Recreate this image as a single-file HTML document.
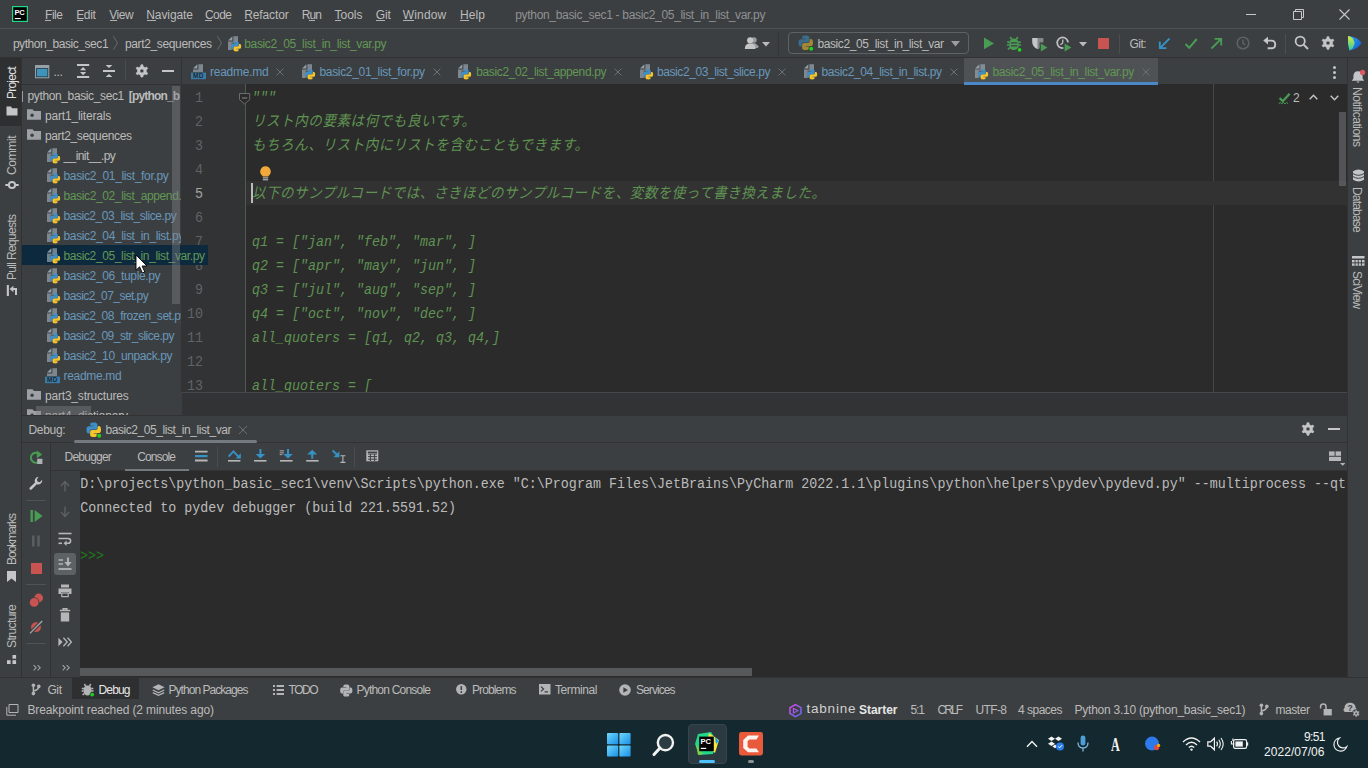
<!DOCTYPE html>
<html lang="ja"><head><meta charset="utf-8"><title>python_basic_sec1 - basic2_05_list_in_list_var.py</title>
<style>
html,body{margin:0;padding:0;}
body{width:1368px;height:768px;overflow:hidden;background:#3c3f41;position:relative;font-family:"Liberation Sans","Noto Sans CJK JP",sans-serif;font-size:12px;color:#bbb;}
.a{position:absolute;}
.t{position:absolute;white-space:pre;}
svg{position:absolute;overflow:visible;}
.vt{position:absolute;white-space:pre;transform-origin:0 0;line-height:20px;font-size:12px;color:#bbb;}
u{text-decoration:underline;text-underline-offset:1px;}
</style></head><body>
<div class="a" style="left:0px;top:28px;width:1368px;height:1px;background:#4f5254;"></div><div class="a" style="left:0px;top:57px;width:1368px;height:1px;background:#323232;"></div><div class="a" style="left:0px;top:58px;width:22px;height:620px;background:#3c3f41;"></div><div class="a" style="left:21px;top:58px;width:1px;height:620px;background:#323232;"></div><div class="a" style="left:0px;top:58px;width:21px;height:68px;background:#2d2f30;"></div><div class="a" style="left:22px;top:58px;width:159px;height:357px;background:#3c3f41;"></div><div class="a" style="left:22px;top:84px;width:159px;height:1px;background:#323232;"></div><div class="a" style="left:181px;top:58px;width:1px;height:357px;background:#323232;"></div><div class="a" style="left:182px;top:58px;width:1165px;height:26px;background:#3c3f41;"></div><div class="a" style="left:182px;top:84px;width:1165px;height:308px;background:#2b2b2b;"></div><div class="a" style="left:182px;top:84px;width:63px;height:308px;background:#313335;"></div><div class="a" style="left:245px;top:84px;width:1px;height:308px;background:#555555;"></div><div class="a" style="left:1213px;top:84px;width:1px;height:308px;background:#474747;"></div><div class="a" style="left:246px;top:181px;width:1101px;height:24px;background:#323232;"></div><div class="a" style="left:1347px;top:58px;width:21px;height:620px;background:#3c3f41;"></div><div class="a" style="left:1347px;top:58px;width:1px;height:620px;background:#323232;"></div><div class="a" style="left:22px;top:392px;width:1325px;height:24px;background:#3c3f41;"></div><div class="a" style="left:22px;top:415px;width:1325px;height:1px;background:#323232;"></div><div class="a" style="left:22px;top:416px;width:1325px;height:26px;background:#3c3f41;"></div><div class="a" style="left:22px;top:442px;width:1325px;height:1px;background:#323232;"></div><div class="a" style="left:22px;top:443px;width:1325px;height:234px;background:#3c3f41;"></div><div class="a" style="left:80px;top:471px;width:1267px;height:206px;background:#2b2b2b;"></div><div class="a" style="left:0px;top:677px;width:1368px;height:1px;background:#323232;"></div><div class="a" style="left:0px;top:678px;width:1368px;height:42px;background:#3c3f41;"></div><div class="a" style="left:0px;top:720px;width:1368px;height:48px;background:#14292f;"></div><svg style="left:12px;top:6px;" width="16" height="16" viewBox="0 0 16 16"><rect x="0" y="0" width="16" height="16" fill="#21d789"/><rect x="1.2" y="1.2" width="13.6" height="13.6" fill="#000"/><text x="2.4" y="8.6" font-size="7.6" font-weight="bold" font-family="Liberation Sans,sans-serif" fill="#fff" letter-spacing="-0.2">PC</text><rect x="2.8" y="12" width="6" height="1.1" fill="#fff"/></svg><span class="t" style="left:45px;top:4.699999999999999px;line-height:20px;font-size:12px;color:#bbbbbb;font-family:'Liberation Sans','Noto Sans CJK JP',sans-serif;letter-spacing:-0.448px;">File</span><span class="t" style="left:76.25px;top:4.699999999999999px;line-height:20px;font-size:12px;color:#bbbbbb;font-family:'Liberation Sans','Noto Sans CJK JP',sans-serif;letter-spacing:-0.396px;">Edit</span><span class="t" style="left:109.25px;top:4.699999999999999px;line-height:20px;font-size:12px;color:#bbbbbb;font-family:'Liberation Sans','Noto Sans CJK JP',sans-serif;letter-spacing:-0.432px;">View</span><span class="t" style="left:146.25px;top:4.699999999999999px;line-height:20px;font-size:12px;color:#bbbbbb;font-family:'Liberation Sans','Noto Sans CJK JP',sans-serif;letter-spacing:-0.089px;">Navigate</span><span class="t" style="left:205px;top:4.699999999999999px;line-height:20px;font-size:12px;color:#bbbbbb;font-family:'Liberation Sans','Noto Sans CJK JP',sans-serif;letter-spacing:-0.562px;">Code</span><span class="t" style="left:244.25px;top:4.699999999999999px;line-height:20px;font-size:12px;color:#bbbbbb;font-family:'Liberation Sans','Noto Sans CJK JP',sans-serif;letter-spacing:-0.123px;">Refactor</span><span class="t" style="left:301.75px;top:4.699999999999999px;line-height:20px;font-size:12px;color:#bbbbbb;font-family:'Liberation Sans','Noto Sans CJK JP',sans-serif;letter-spacing:-0.883px;">Run</span><span class="t" style="left:334.5px;top:4.699999999999999px;line-height:20px;font-size:12px;color:#bbbbbb;font-family:'Liberation Sans','Noto Sans CJK JP',sans-serif;letter-spacing:-0.004px;">Tools</span><span class="t" style="left:375.75px;top:4.699999999999999px;line-height:20px;font-size:12px;color:#bbbbbb;font-family:'Liberation Sans','Noto Sans CJK JP',sans-serif;letter-spacing:-0.172px;">Git</span><span class="t" style="left:402.75px;top:4.699999999999999px;line-height:20px;font-size:12px;color:#bbbbbb;font-family:'Liberation Sans','Noto Sans CJK JP',sans-serif;letter-spacing:0.163px;">Window</span><span class="t" style="left:460px;top:4.699999999999999px;line-height:20px;font-size:12px;color:#bbbbbb;font-family:'Liberation Sans','Noto Sans CJK JP',sans-serif;letter-spacing:0.104px;">Help</span><div class="a" style="left:45px;top:20.3px;width:6px;height:1px;background:#b0b0b0;"></div><div class="a" style="left:76.5px;top:20.3px;width:6.0px;height:1px;background:#b0b0b0;"></div><div class="a" style="left:109.5px;top:20.3px;width:7.5px;height:1px;background:#b0b0b0;"></div><div class="a" style="left:146.5px;top:20.3px;width:9.0px;height:1px;background:#b0b0b0;"></div><div class="a" style="left:205px;top:20.3px;width:7px;height:1px;background:#b0b0b0;"></div><div class="a" style="left:244.5px;top:20.3px;width:7.5px;height:1px;background:#b0b0b0;"></div><div class="a" style="left:308.5px;top:20.3px;width:6.5px;height:1px;background:#b0b0b0;"></div><div class="a" style="left:334.5px;top:20.3px;width:6.5px;height:1px;background:#b0b0b0;"></div><div class="a" style="left:376px;top:20.3px;width:8.5px;height:1px;background:#b0b0b0;"></div><div class="a" style="left:403px;top:20.3px;width:11px;height:1px;background:#b0b0b0;"></div><div class="a" style="left:460px;top:20.3px;width:8.5px;height:1px;background:#b0b0b0;"></div><span class="t" style="left:515.25px;top:4.699999999999999px;line-height:20px;font-size:12px;color:#8f9193;font-family:'Liberation Sans','Noto Sans CJK JP',sans-serif;letter-spacing:-0.318px;">python_basic_sec1 - basic2_05_list_in_list_var.py</span><svg style="left:1246px;top:14px;" width="10" height="1" viewBox="0 0 10 1"><rect width="10" height="1" fill="#c8c8c8"/></svg><svg style="left:1293px;top:9px;" width="11" height="11" viewBox="0 0 11 11"><path d="M0.5 2.5 h8 v8 h-8z M2.5 2.5 v-2 h8 v8 h-2" stroke="#c8c8c8" fill="none" stroke-width="1"/></svg><svg style="left:1339px;top:9px;" width="11" height="11" viewBox="0 0 11 11"><path d="M0.5 0.5 L10.5 10.5 M10.5 0.5 L0.5 10.5" stroke="#c8c8c8" fill="none" stroke-width="1.1"/></svg><span class="t" style="left:12.9px;top:34.0px;line-height:20px;font-size:12px;color:#bbbbbb;font-family:'Liberation Sans','Noto Sans CJK JP',sans-serif;letter-spacing:-0.441px;">python_basic_sec1</span><span class="t" style="left:125px;top:34.0px;line-height:20px;font-size:12px;color:#bbbbbb;font-family:'Liberation Sans','Noto Sans CJK JP',sans-serif;letter-spacing:-0.363px;">part2_sequences</span><svg style="left:113.1px;top:36.4px;" width="5" height="14" viewBox="0 0 5 14"><path d="M0.4 0.3 L4.5 7 L0.4 13.7" stroke="#66696b" fill="none" stroke-width="1"/></svg><svg style="left:217.1px;top:36.4px;" width="5" height="14" viewBox="0 0 5 14"><path d="M0.4 0.3 L4.5 7 L0.4 13.7" stroke="#66696b" fill="none" stroke-width="1"/></svg><svg style="left:227px;top:36px;" width="16" height="16" viewBox="0 0 16 16"><path d="M6.4 0.2 H11 V14 H1 V5.6 H6.4z" fill="#9aa7b0" fill-opacity=".7"/><path d="M5.4 0.2 L1 4.6 H5.4z" fill="#9aa7b0" fill-opacity=".9"/><rect x="4.6" y="6.4" width="7" height="8" fill="#3c3f41" fill-opacity=".55"/><g transform="translate(4.2 5.4) scale(1.0)"><path d="M4.9 0 C2.4 0 2.6 1.1 2.6 1.1 V2.2 H5 V2.6 H1.6 C1.6 2.6 0 2.4 0 5 C0 7.6 1.4 7.5 1.4 7.5 H2.3 V6.3 C2.3 6.3 2.2 4.9 3.7 4.9 H6.1 C6.1 4.9 7.5 4.9 7.5 3.5 V1.4 C7.5 1.4 7.7 0 4.9 0z" fill="#3d8fc9"/><path d="M5.1 10 C7.6 10 7.4 8.9 7.4 8.9 V7.8 H5 V7.4 H8.4 C8.4 7.4 10 7.6 10 5 C10 2.4 8.6 2.5 8.6 2.5 H7.7 V3.7 C7.7 3.7 7.8 5.1 6.3 5.1 H3.9 C3.9 5.1 2.5 5.1 2.5 6.5 V8.6 C2.5 8.6 2.3 10 5.1 10z" fill="#f5c52c"/></g></svg><span class="t" style="left:244.25px;top:34.0px;line-height:20px;font-size:12px;color:#629755;font-family:'Liberation Sans','Noto Sans CJK JP',sans-serif;letter-spacing:-0.352px;">basic2_05_list_in_list_var.py</span><svg style="left:744px;top:35.5px;" width="16" height="14" viewBox="0 0 16 14"><circle cx="10" cy="4" r="2.7" fill="#9a9c9e"/><path d="M6 12 q0 -5 4.2 -5 q2 0.4 4.6 3.6 l-1 1.4z" fill="#9a9c9e"/><circle cx="6.2" cy="4.4" r="3.1" fill="#c3c5c6"/><path d="M0.8 13 q0 -5.4 5.4 -5.4 q5.4 0 5.4 5.4z" fill="#c3c5c6"/></svg><svg style="left:762px;top:42px;" width="8" height="5" viewBox="0 0 8 5"><path d="M0 0 H8 L4 4.5z" fill="#bbbbbb"/></svg><div class="a" style="left:778px;top:32px;width:1px;height:24px;background:#333537;"></div><div class="a" style="left:788px;top:32px;width:181px;height:22px;border:1px solid #5f6265;border-radius:4px;box-sizing:border-box;"></div><svg style="left:798px;top:35px;" width="16" height="16" viewBox="0 0 16 16"><g opacity=".55"><g transform="translate(0.5 0.5) scale(1.45)"><path d="M4.9 0 C2.4 0 2.6 1.1 2.6 1.1 V2.2 H5 V2.6 H1.6 C1.6 2.6 0 2.4 0 5 C0 7.6 1.4 7.5 1.4 7.5 H2.3 V6.3 C2.3 6.3 2.2 4.9 3.7 4.9 H6.1 C6.1 4.9 7.5 4.9 7.5 3.5 V1.4 C7.5 1.4 7.7 0 4.9 0z" fill="#3d8fc9"/><path d="M5.1 10 C7.6 10 7.4 8.9 7.4 8.9 V7.8 H5 V7.4 H8.4 C8.4 7.4 10 7.6 10 5 C10 2.4 8.6 2.5 8.6 2.5 H7.7 V3.7 C7.7 3.7 7.8 5.1 6.3 5.1 H3.9 C3.9 5.1 2.5 5.1 2.5 6.5 V8.6 C2.5 8.6 2.3 10 5.1 10z" fill="#f5c52c"/></g></g><circle cx="13.2" cy="13.8" r="2.7" fill="#3c3f41"/><circle cx="13.2" cy="13.8" r="2" fill="#1fd11f"/></svg><span class="t" style="left:817.5px;top:34.0px;line-height:20px;font-size:12px;color:#bbbbbb;font-family:'Liberation Sans','Noto Sans CJK JP',sans-serif;letter-spacing:-0.410px;">basic2_05_list_in_list_var</span><svg style="left:951px;top:41px;" width="9" height="6" viewBox="0 0 9 6"><path d="M0 0 H9 L4.5 5.5z" fill="#9a9c9e"/></svg><svg style="left:982.5px;top:36.5px;" width="12" height="13" viewBox="0 0 12 13"><path d="M1 0.6 L11 6.4 L1 12.2z" fill="#499c54"/></svg><svg style="left:1006px;top:35.5px;" width="16" height="16" viewBox="0 0 16 16"><path d="M8 2.6 C11.4 2.6 12.8 5.2 12.8 8.4 C12.8 12 10.9 14 8 14 C5.1 14 3.2 12 3.2 8.4 C3.2 5.2 4.6 2.6 8 2.6z" fill="#499c54"/><path d="M5.6 3.2 L4.2 1 M10.4 3.2 L11.8 1 M3.6 6.2 H1.2 M3.4 9 H0.9 M4 11.6 L1.9 13.4 M12.4 6.2 H14.8 M12.6 9 H15.1 M12 11.6 L14.1 13.4" stroke="#499c54" stroke-width="1.7" fill="none"/><path d="M4.8 6.9 H11.2 M4.8 9.9 H11.2" stroke="#3c3f41" stroke-width="1.1"/><circle cx="13.6" cy="13.8" r="2.5" fill="#3c3f41"/><circle cx="13.6" cy="13.8" r="1.9" fill="#23d123"/></svg><svg style="left:1031px;top:35.5px;" width="17" height="16" viewBox="0 0 17 16"><path d="M1.2 2 H6.8 V13.2 Q1.2 11 1.2 6z" fill="#c3c5c6"/><path d="M6.8 2 H12.4 V6 Q12.4 11 6.8 13.2z" fill="#85888a"/><path d="M6.8 3.8 H10.6 V6.4 H6.8z" fill="#3c3f41" opacity="0"/><path d="M8.6 6.4 H17 V16 H8.6z" fill="#3c3f41"/><path d="M9.8 7.6 L16.4 11.5 L9.8 15.4z" fill="#499c54"/></svg><svg style="left:1055px;top:35.5px;" width="17" height="16" viewBox="0 0 17 16"><circle cx="7.6" cy="6.8" r="5.4" fill="none" stroke="#bfc1c2" stroke-width="1.7"/><path d="M7.8 3.4 V7 L5.4 8.8" stroke="#bfc1c2" stroke-width="1.3" fill="none"/><path d="M8.4 6.4 H17 V16 H8.4z" fill="#3c3f41"/><path d="M9.6 7.6 L16.4 11.5 L9.6 15.4z" fill="#499c54"/></svg><svg style="left:1078.8px;top:41.8px;" width="8" height="5" viewBox="0 0 8 5"><path d="M0 0 H8 L4 4.5z" fill="#bbbbbb"/></svg><div class="a" style="left:1097.5px;top:37.5px;width:11px;height:11px;background:#c75450;"></div><div class="a" style="left:1119px;top:34px;width:1px;height:20px;background:#4b4d4f;"></div><span class="t" style="left:1129.5px;top:34.0px;line-height:20px;font-size:12px;color:#bbbbbb;font-family:'Liberation Sans','Noto Sans CJK JP',sans-serif;letter-spacing:-0.557px;">Git:</span><svg style="left:1158px;top:36.5px;" width="13" height="13" viewBox="0 0 13 13"><path d="M11.5 1.5 L2.2 10.8 M1.8 4.6 V11.2 H8.4" stroke="#3592c4" stroke-width="1.8" fill="none"/></svg><svg style="left:1184px;top:36.5px;" width="14" height="13" viewBox="0 0 14 13"><path d="M1.5 7 L5.2 10.8 L12.8 2" stroke="#499c54" stroke-width="2" fill="none"/></svg><svg style="left:1210px;top:36.5px;" width="13" height="13" viewBox="0 0 13 13"><path d="M1.5 11.5 L10.8 2.2 M4.6 1.8 H11.2 V8.4" stroke="#499c54" stroke-width="1.8" fill="none"/></svg><svg style="left:1236px;top:36px;" width="14" height="14" viewBox="0 0 14 14"><circle cx="7" cy="7" r="5.8" fill="none" stroke="#5e6163" stroke-width="1.6"/><path d="M7 3.6 V7.2 L9.2 8.8" stroke="#5e6163" stroke-width="1.5" fill="none"/></svg><svg style="left:1262px;top:35.5px;" width="15" height="15" viewBox="0 0 15 15"><path d="M5 4.6 H9.4 Q13.2 4.6 13.2 8.4 Q13.2 12.2 9.4 12.2 H5.6" stroke="#c3c5c6" stroke-width="1.9" fill="none"/><path d="M6 0.8 V8.4 L1.2 4.6z" fill="#c3c5c6"/></svg><div class="a" style="left:1285px;top:34px;width:1px;height:20px;background:#4b4d4f;"></div><svg style="left:1294px;top:35px;" width="15" height="15" viewBox="0 0 15 15"><circle cx="6.2" cy="6.2" r="4.6" fill="none" stroke="#c3c5c6" stroke-width="1.8"/><path d="M9.6 9.6 L14 14" stroke="#c3c5c6" stroke-width="2"/></svg><svg style="left:1321px;top:36px;" width="14" height="14" viewBox="0 0 16 16"><path d="M6.65 2.98 L6.87 0.89 L9.13 0.89 L9.35 2.98 L11.68 4.32 L13.60 3.47 L14.72 5.42 L13.02 6.65 L13.02 9.35 L14.72 10.58 L13.60 12.53 L11.68 11.68 L9.35 13.02 L9.13 15.11 L6.87 15.11 L6.65 13.02 L4.32 11.68 L2.40 12.53 L1.28 10.58 L2.98 9.35 L2.98 6.65 L1.28 5.42 L2.40 3.47 L4.32 4.32z M8 5.7 a2.3 2.3 0 1 0 0.001 0z" fill="#c3c5c6" fill-rule="evenodd" stroke="#c3c5c6" stroke-width="0.8" stroke-linejoin="round"/></svg><svg style="left:1346px;top:35px;" width="17" height="17" viewBox="0 0 17 17"><defs><linearGradient id="tb1" x1="0" y1="0" x2="0" y2="1"><stop offset="0" stop-color="#d8ec3c"/><stop offset="1" stop-color="#2cc7b0"/></linearGradient><linearGradient id="tb2" x1="0" y1="0" x2="1" y2="1"><stop offset="0" stop-color="#2aa8f5"/><stop offset="1" stop-color="#1456c8"/></linearGradient></defs><path d="M2 1 Q12 2 15.6 8 Q12 14 3.4 15.6 Q1.4 8 2 1z" fill="url(#tb2)"/><path d="M2 1 Q7.6 2 8.6 8 Q8 13.4 3.4 15.6 Q1.4 8 2 1z" fill="url(#tb1)"/></svg><span class="t" style="left:1.6999999999999993px;top:98.7px;transform:rotate(-90deg);transform-origin:0 0;line-height:20px;font-size:12px;color:#e0e0e0;font-family:'Liberation Sans','Noto Sans CJK JP',sans-serif;letter-spacing:-0.777px;">Project</span><svg style="left:5.5px;top:106px;" width="12" height="10" viewBox="0 0 12 10"><path d="M0.5 0.5 H5 L6.2 2.2 H11.5 V9.5 H0.5z" fill="#c3c5c6"/></svg><span class="t" style="left:1.6999999999999993px;top:175px;transform:rotate(-90deg);transform-origin:0 0;line-height:20px;font-size:12px;color:#bbbbbb;font-family:'Liberation Sans','Noto Sans CJK JP',sans-serif;letter-spacing:-0.329px;">Commit</span><svg style="left:4.5px;top:180px;" width="14" height="10" viewBox="0 0 14 10"><circle cx="7" cy="5" r="3.1" fill="none" stroke="#c3c5c6" stroke-width="2"/><path d="M0.3 5 H3.4 M10.6 5 H13.7" stroke="#c3c5c6" stroke-width="2"/></svg><span class="t" style="left:1.6999999999999993px;top:279.7px;transform:rotate(-90deg);transform-origin:0 0;line-height:20px;font-size:12px;color:#bbbbbb;font-family:'Liberation Sans','Noto Sans CJK JP',sans-serif;letter-spacing:-0.671px;">Pull Requests</span><svg style="left:6px;top:285px;" width="12" height="12" viewBox="0 0 12 12"><rect x="0.8" y="0" width="2.1" height="11" fill="#c3c5c6"/><path d="M3.6 4 L7.4 0.8 V7.2z" fill="#c3c5c6"/><path d="M7 4 H10 V10" stroke="#c3c5c6" stroke-width="2" fill="none"/></svg><span class="t" style="left:1.6999999999999993px;top:565.3px;transform:rotate(-90deg);transform-origin:0 0;line-height:20px;font-size:12px;color:#bbbbbb;font-family:'Liberation Sans','Noto Sans CJK JP',sans-serif;letter-spacing:-1.004px;">Bookmarks</span><svg style="left:7px;top:571px;" width="10" height="12" viewBox="0 0 10 12"><path d="M0 0 H9 V11 L4.5 7.4 L0 11z" fill="#c3c5c6"/></svg><span class="t" style="left:1.6999999999999993px;top:648.3px;transform:rotate(-90deg);transform-origin:0 0;line-height:20px;font-size:12px;color:#bbbbbb;font-family:'Liberation Sans','Noto Sans CJK JP',sans-serif;letter-spacing:-0.611px;">Structure</span><svg style="left:7px;top:655px;" width="10" height="10" viewBox="0 0 10 10"><rect x="5.5" y="0" width="3.6" height="3.7" fill="#c3c5c6"/><rect x="0" y="5.2" width="3.6" height="3.8" fill="#c3c5c6"/><rect x="5.5" y="5.2" width="3.6" height="3.8" fill="#c3c5c6"/></svg><svg style="left:35px;top:65px;" width="15" height="14" viewBox="0 0 15 14"><rect x="0" y="0" width="14.3" height="13.3" fill="#97a0a7"/><rect x="1.1" y="3.1" width="12.1" height="9.1" fill="#21394a"/><rect x="1.9" y="3.9" width="10.5" height="7.5" fill="#3f94b8"/></svg><span class="t" style="left:53.6px;top:61.5px;line-height:20px;font-size:12px;color:#bbbbbb;font-family:'Liberation Sans','Noto Sans CJK JP',sans-serif;letter-spacing:-0.4px;">...</span><svg style="left:77px;top:63.8px;" width="13" height="15" viewBox="0 0 13 15"><path d="M0 1.1 H12.2 M0 13.1 H12.2" stroke="#c3c5c6" stroke-width="2"/><path d="M3 6.2 L6.1 3 L9.2 6.2z M3 7.9 L6.1 11.2 L9.2 7.9z" fill="#c3c5c6"/></svg><svg style="left:103px;top:64px;" width="13" height="14" viewBox="0 0 13 14"><path d="M0 7 H12" stroke="#c3c5c6" stroke-width="2"/><path d="M2.6 1 L6 4 L9.4 1z M2.6 13 L6 10 L9.4 13z" fill="#c3c5c6"/></svg><div class="a" style="left:125px;top:60px;width:1px;height:20px;background:#4b4d4f;"></div><svg style="left:135.2px;top:64.3px;" width="13.8" height="13.8" viewBox="0 0 16 16"><path d="M6.65 2.98 L6.87 0.89 L9.13 0.89 L9.35 2.98 L11.68 4.32 L13.60 3.47 L14.72 5.42 L13.02 6.65 L13.02 9.35 L14.72 10.58 L13.60 12.53 L11.68 11.68 L9.35 13.02 L9.13 15.11 L6.87 15.11 L6.65 13.02 L4.32 11.68 L2.40 12.53 L1.28 10.58 L2.98 9.35 L2.98 6.65 L1.28 5.42 L2.40 3.47 L4.32 4.32z M8 5.7 a2.3 2.3 0 1 0 0.001 0z" fill="#c3c5c6" fill-rule="evenodd" stroke="#c3c5c6" stroke-width="0.8" stroke-linejoin="round"/></svg><div class="a" style="left:162px;top:70px;width:12px;height:2px;background:#c3c5c6;"></div><div class="a" style="left:22px;top:85px;width:159px;height:330px;overflow:hidden;"><div class="a" style="left:0px;top:6px;width:1px;height:11px;background:#9a9c9e;"></div><span class="t" style="left:5.5px;top:1.0px;line-height:20px;font-size:12px;color:#bbbbbb;font-family:'Liberation Sans','Noto Sans CJK JP',sans-serif;letter-spacing:-0.375px;">python_basic_sec1</span><span class="t" style="left:106.75px;top:1.0px;line-height:20px;font-size:12px;color:#bbbbbb;font-family:'Liberation Sans','Noto Sans CJK JP',sans-serif;letter-spacing:-0.819px;font-weight:bold;">[python_b</span><span class="t" style="left:158.8px;top:1.0px;line-height:20px;font-size:12px;color:#bbbbbb;font-family:'Liberation Sans','Noto Sans CJK JP',sans-serif;font-weight:bold;">asic_sec1]</span><svg style="left:5px;top:24px;" width="16" height="16" viewBox="0 0 16 16"><path d="M0 0.2 H5.5 L7 2 H14 V10.8 H0z" fill="#9da1a5"/><circle cx="5.1" cy="6.3" r="1.7" fill="#3c3f41"/></svg><span class="t" style="left:23px;top:21.0px;line-height:20px;font-size:12px;color:#bbbbbb;font-family:'Liberation Sans','Noto Sans CJK JP',sans-serif;letter-spacing:-0.189px;">part1_literals</span><svg style="left:5px;top:44px;" width="16" height="16" viewBox="0 0 16 16"><path d="M0 0.2 H5.5 L7 2 H14 V10.8 H0z" fill="#9da1a5"/><circle cx="5.1" cy="6.3" r="1.7" fill="#3c3f41"/></svg><span class="t" style="left:23px;top:41.0px;line-height:20px;font-size:12px;color:#bbbbbb;font-family:'Liberation Sans','Noto Sans CJK JP',sans-serif;letter-spacing:-0.363px;">part2_sequences</span><svg style="left:24px;top:63px;" width="16" height="16" viewBox="0 0 16 16"><path d="M6.4 0.2 H11 V14 H1 V5.6 H6.4z" fill="#9aa7b0" fill-opacity=".7"/><path d="M5.4 0.2 L1 4.6 H5.4z" fill="#9aa7b0" fill-opacity=".9"/><rect x="4.6" y="6.4" width="7" height="8" fill="#3c3f41" fill-opacity=".55"/><g transform="translate(4.2 5.4) scale(1.0)"><path d="M4.9 0 C2.4 0 2.6 1.1 2.6 1.1 V2.2 H5 V2.6 H1.6 C1.6 2.6 0 2.4 0 5 C0 7.6 1.4 7.5 1.4 7.5 H2.3 V6.3 C2.3 6.3 2.2 4.9 3.7 4.9 H6.1 C6.1 4.9 7.5 4.9 7.5 3.5 V1.4 C7.5 1.4 7.7 0 4.9 0z" fill="#3d8fc9"/><path d="M5.1 10 C7.6 10 7.4 8.9 7.4 8.9 V7.8 H5 V7.4 H8.4 C8.4 7.4 10 7.6 10 5 C10 2.4 8.6 2.5 8.6 2.5 H7.7 V3.7 C7.7 3.7 7.8 5.1 6.3 5.1 H3.9 C3.9 5.1 2.5 5.1 2.5 6.5 V8.6 C2.5 8.6 2.3 10 5.1 10z" fill="#f5c52c"/></g></svg><span class="t" style="left:41.5px;top:61.0px;line-height:20px;font-size:12px;color:#bbbbbb;font-family:'Liberation Sans','Noto Sans CJK JP',sans-serif;letter-spacing:-0.580px;">__init__.py</span><svg style="left:24px;top:83px;" width="16" height="16" viewBox="0 0 16 16"><path d="M6.4 0.2 H11 V14 H1 V5.6 H6.4z" fill="#9aa7b0" fill-opacity=".7"/><path d="M5.4 0.2 L1 4.6 H5.4z" fill="#9aa7b0" fill-opacity=".9"/><rect x="4.6" y="6.4" width="7" height="8" fill="#3c3f41" fill-opacity=".55"/><g transform="translate(4.2 5.4) scale(1.0)"><path d="M4.9 0 C2.4 0 2.6 1.1 2.6 1.1 V2.2 H5 V2.6 H1.6 C1.6 2.6 0 2.4 0 5 C0 7.6 1.4 7.5 1.4 7.5 H2.3 V6.3 C2.3 6.3 2.2 4.9 3.7 4.9 H6.1 C6.1 4.9 7.5 4.9 7.5 3.5 V1.4 C7.5 1.4 7.7 0 4.9 0z" fill="#3d8fc9"/><path d="M5.1 10 C7.6 10 7.4 8.9 7.4 8.9 V7.8 H5 V7.4 H8.4 C8.4 7.4 10 7.6 10 5 C10 2.4 8.6 2.5 8.6 2.5 H7.7 V3.7 C7.7 3.7 7.8 5.1 6.3 5.1 H3.9 C3.9 5.1 2.5 5.1 2.5 6.5 V8.6 C2.5 8.6 2.3 10 5.1 10z" fill="#f5c52c"/></g></svg><span class="t" style="left:41.5px;top:81.0px;line-height:20px;font-size:12px;color:#6897bb;font-family:'Liberation Sans','Noto Sans CJK JP',sans-serif;letter-spacing:-0.341px;">basic2_01_list_for.py</span><svg style="left:24px;top:103px;" width="16" height="16" viewBox="0 0 16 16"><path d="M6.4 0.2 H11 V14 H1 V5.6 H6.4z" fill="#9aa7b0" fill-opacity=".7"/><path d="M5.4 0.2 L1 4.6 H5.4z" fill="#9aa7b0" fill-opacity=".9"/><rect x="4.6" y="6.4" width="7" height="8" fill="#3c3f41" fill-opacity=".55"/><g transform="translate(4.2 5.4) scale(1.0)"><path d="M4.9 0 C2.4 0 2.6 1.1 2.6 1.1 V2.2 H5 V2.6 H1.6 C1.6 2.6 0 2.4 0 5 C0 7.6 1.4 7.5 1.4 7.5 H2.3 V6.3 C2.3 6.3 2.2 4.9 3.7 4.9 H6.1 C6.1 4.9 7.5 4.9 7.5 3.5 V1.4 C7.5 1.4 7.7 0 4.9 0z" fill="#3d8fc9"/><path d="M5.1 10 C7.6 10 7.4 8.9 7.4 8.9 V7.8 H5 V7.4 H8.4 C8.4 7.4 10 7.6 10 5 C10 2.4 8.6 2.5 8.6 2.5 H7.7 V3.7 C7.7 3.7 7.8 5.1 6.3 5.1 H3.9 C3.9 5.1 2.5 5.1 2.5 6.5 V8.6 C2.5 8.6 2.3 10 5.1 10z" fill="#f5c52c"/></g></svg><span class="t" style="left:41.5px;top:101.0px;line-height:20px;font-size:12px;color:#629755;font-family:'Liberation Sans','Noto Sans CJK JP',sans-serif;letter-spacing:-0.371px;">basic2_02_list_append.py</span><svg style="left:24px;top:123px;" width="16" height="16" viewBox="0 0 16 16"><path d="M6.4 0.2 H11 V14 H1 V5.6 H6.4z" fill="#9aa7b0" fill-opacity=".7"/><path d="M5.4 0.2 L1 4.6 H5.4z" fill="#9aa7b0" fill-opacity=".9"/><rect x="4.6" y="6.4" width="7" height="8" fill="#3c3f41" fill-opacity=".55"/><g transform="translate(4.2 5.4) scale(1.0)"><path d="M4.9 0 C2.4 0 2.6 1.1 2.6 1.1 V2.2 H5 V2.6 H1.6 C1.6 2.6 0 2.4 0 5 C0 7.6 1.4 7.5 1.4 7.5 H2.3 V6.3 C2.3 6.3 2.2 4.9 3.7 4.9 H6.1 C6.1 4.9 7.5 4.9 7.5 3.5 V1.4 C7.5 1.4 7.7 0 4.9 0z" fill="#3d8fc9"/><path d="M5.1 10 C7.6 10 7.4 8.9 7.4 8.9 V7.8 H5 V7.4 H8.4 C8.4 7.4 10 7.6 10 5 C10 2.4 8.6 2.5 8.6 2.5 H7.7 V3.7 C7.7 3.7 7.8 5.1 6.3 5.1 H3.9 C3.9 5.1 2.5 5.1 2.5 6.5 V8.6 C2.5 8.6 2.3 10 5.1 10z" fill="#f5c52c"/></g></svg><span class="t" style="left:41.5px;top:121.0px;line-height:20px;font-size:12px;color:#6897bb;font-family:'Liberation Sans','Noto Sans CJK JP',sans-serif;letter-spacing:-0.432px;">basic2_03_list_slice.py</span><svg style="left:24px;top:143px;" width="16" height="16" viewBox="0 0 16 16"><path d="M6.4 0.2 H11 V14 H1 V5.6 H6.4z" fill="#9aa7b0" fill-opacity=".7"/><path d="M5.4 0.2 L1 4.6 H5.4z" fill="#9aa7b0" fill-opacity=".9"/><rect x="4.6" y="6.4" width="7" height="8" fill="#3c3f41" fill-opacity=".55"/><g transform="translate(4.2 5.4) scale(1.0)"><path d="M4.9 0 C2.4 0 2.6 1.1 2.6 1.1 V2.2 H5 V2.6 H1.6 C1.6 2.6 0 2.4 0 5 C0 7.6 1.4 7.5 1.4 7.5 H2.3 V6.3 C2.3 6.3 2.2 4.9 3.7 4.9 H6.1 C6.1 4.9 7.5 4.9 7.5 3.5 V1.4 C7.5 1.4 7.7 0 4.9 0z" fill="#3d8fc9"/><path d="M5.1 10 C7.6 10 7.4 8.9 7.4 8.9 V7.8 H5 V7.4 H8.4 C8.4 7.4 10 7.6 10 5 C10 2.4 8.6 2.5 8.6 2.5 H7.7 V3.7 C7.7 3.7 7.8 5.1 6.3 5.1 H3.9 C3.9 5.1 2.5 5.1 2.5 6.5 V8.6 C2.5 8.6 2.3 10 5.1 10z" fill="#f5c52c"/></g></svg><span class="t" style="left:41.5px;top:141.0px;line-height:20px;font-size:12px;color:#6897bb;font-family:'Liberation Sans','Noto Sans CJK JP',sans-serif;letter-spacing:-0.361px;">basic2_04_list_in_list.py</span><svg style="left:24px;top:183px;" width="16" height="16" viewBox="0 0 16 16"><path d="M6.4 0.2 H11 V14 H1 V5.6 H6.4z" fill="#9aa7b0" fill-opacity=".7"/><path d="M5.4 0.2 L1 4.6 H5.4z" fill="#9aa7b0" fill-opacity=".9"/><rect x="4.6" y="6.4" width="7" height="8" fill="#3c3f41" fill-opacity=".55"/><g transform="translate(4.2 5.4) scale(1.0)"><path d="M4.9 0 C2.4 0 2.6 1.1 2.6 1.1 V2.2 H5 V2.6 H1.6 C1.6 2.6 0 2.4 0 5 C0 7.6 1.4 7.5 1.4 7.5 H2.3 V6.3 C2.3 6.3 2.2 4.9 3.7 4.9 H6.1 C6.1 4.9 7.5 4.9 7.5 3.5 V1.4 C7.5 1.4 7.7 0 4.9 0z" fill="#3d8fc9"/><path d="M5.1 10 C7.6 10 7.4 8.9 7.4 8.9 V7.8 H5 V7.4 H8.4 C8.4 7.4 10 7.6 10 5 C10 2.4 8.6 2.5 8.6 2.5 H7.7 V3.7 C7.7 3.7 7.8 5.1 6.3 5.1 H3.9 C3.9 5.1 2.5 5.1 2.5 6.5 V8.6 C2.5 8.6 2.3 10 5.1 10z" fill="#f5c52c"/></g></svg><span class="t" style="left:41.5px;top:181.0px;line-height:20px;font-size:12px;color:#6897bb;font-family:'Liberation Sans','Noto Sans CJK JP',sans-serif;letter-spacing:-0.378px;">basic2_06_tuple.py</span><svg style="left:24px;top:203px;" width="16" height="16" viewBox="0 0 16 16"><path d="M6.4 0.2 H11 V14 H1 V5.6 H6.4z" fill="#9aa7b0" fill-opacity=".7"/><path d="M5.4 0.2 L1 4.6 H5.4z" fill="#9aa7b0" fill-opacity=".9"/><rect x="4.6" y="6.4" width="7" height="8" fill="#3c3f41" fill-opacity=".55"/><g transform="translate(4.2 5.4) scale(1.0)"><path d="M4.9 0 C2.4 0 2.6 1.1 2.6 1.1 V2.2 H5 V2.6 H1.6 C1.6 2.6 0 2.4 0 5 C0 7.6 1.4 7.5 1.4 7.5 H2.3 V6.3 C2.3 6.3 2.2 4.9 3.7 4.9 H6.1 C6.1 4.9 7.5 4.9 7.5 3.5 V1.4 C7.5 1.4 7.7 0 4.9 0z" fill="#3d8fc9"/><path d="M5.1 10 C7.6 10 7.4 8.9 7.4 8.9 V7.8 H5 V7.4 H8.4 C8.4 7.4 10 7.6 10 5 C10 2.4 8.6 2.5 8.6 2.5 H7.7 V3.7 C7.7 3.7 7.8 5.1 6.3 5.1 H3.9 C3.9 5.1 2.5 5.1 2.5 6.5 V8.6 C2.5 8.6 2.3 10 5.1 10z" fill="#f5c52c"/></g></svg><span class="t" style="left:41.5px;top:201.0px;line-height:20px;font-size:12px;color:#6897bb;font-family:'Liberation Sans','Noto Sans CJK JP',sans-serif;letter-spacing:-0.544px;">basic2_07_set.py</span><svg style="left:24px;top:223px;" width="16" height="16" viewBox="0 0 16 16"><path d="M6.4 0.2 H11 V14 H1 V5.6 H6.4z" fill="#9aa7b0" fill-opacity=".7"/><path d="M5.4 0.2 L1 4.6 H5.4z" fill="#9aa7b0" fill-opacity=".9"/><rect x="4.6" y="6.4" width="7" height="8" fill="#3c3f41" fill-opacity=".55"/><g transform="translate(4.2 5.4) scale(1.0)"><path d="M4.9 0 C2.4 0 2.6 1.1 2.6 1.1 V2.2 H5 V2.6 H1.6 C1.6 2.6 0 2.4 0 5 C0 7.6 1.4 7.5 1.4 7.5 H2.3 V6.3 C2.3 6.3 2.2 4.9 3.7 4.9 H6.1 C6.1 4.9 7.5 4.9 7.5 3.5 V1.4 C7.5 1.4 7.7 0 4.9 0z" fill="#3d8fc9"/><path d="M5.1 10 C7.6 10 7.4 8.9 7.4 8.9 V7.8 H5 V7.4 H8.4 C8.4 7.4 10 7.6 10 5 C10 2.4 8.6 2.5 8.6 2.5 H7.7 V3.7 C7.7 3.7 7.8 5.1 6.3 5.1 H3.9 C3.9 5.1 2.5 5.1 2.5 6.5 V8.6 C2.5 8.6 2.3 10 5.1 10z" fill="#f5c52c"/></g></svg><span class="t" style="left:41.5px;top:221.0px;line-height:20px;font-size:12px;color:#6897bb;font-family:'Liberation Sans','Noto Sans CJK JP',sans-serif;letter-spacing:-0.474px;">basic2_08_frozen_set.py</span><svg style="left:24px;top:243px;" width="16" height="16" viewBox="0 0 16 16"><path d="M6.4 0.2 H11 V14 H1 V5.6 H6.4z" fill="#9aa7b0" fill-opacity=".7"/><path d="M5.4 0.2 L1 4.6 H5.4z" fill="#9aa7b0" fill-opacity=".9"/><rect x="4.6" y="6.4" width="7" height="8" fill="#3c3f41" fill-opacity=".55"/><g transform="translate(4.2 5.4) scale(1.0)"><path d="M4.9 0 C2.4 0 2.6 1.1 2.6 1.1 V2.2 H5 V2.6 H1.6 C1.6 2.6 0 2.4 0 5 C0 7.6 1.4 7.5 1.4 7.5 H2.3 V6.3 C2.3 6.3 2.2 4.9 3.7 4.9 H6.1 C6.1 4.9 7.5 4.9 7.5 3.5 V1.4 C7.5 1.4 7.7 0 4.9 0z" fill="#3d8fc9"/><path d="M5.1 10 C7.6 10 7.4 8.9 7.4 8.9 V7.8 H5 V7.4 H8.4 C8.4 7.4 10 7.6 10 5 C10 2.4 8.6 2.5 8.6 2.5 H7.7 V3.7 C7.7 3.7 7.8 5.1 6.3 5.1 H3.9 C3.9 5.1 2.5 5.1 2.5 6.5 V8.6 C2.5 8.6 2.3 10 5.1 10z" fill="#f5c52c"/></g></svg><span class="t" style="left:41.5px;top:241.0px;line-height:20px;font-size:12px;color:#6897bb;font-family:'Liberation Sans','Noto Sans CJK JP',sans-serif;letter-spacing:-0.496px;">basic2_09_str_slice.py</span><svg style="left:24px;top:263px;" width="16" height="16" viewBox="0 0 16 16"><path d="M6.4 0.2 H11 V14 H1 V5.6 H6.4z" fill="#9aa7b0" fill-opacity=".7"/><path d="M5.4 0.2 L1 4.6 H5.4z" fill="#9aa7b0" fill-opacity=".9"/><rect x="4.6" y="6.4" width="7" height="8" fill="#3c3f41" fill-opacity=".55"/><g transform="translate(4.2 5.4) scale(1.0)"><path d="M4.9 0 C2.4 0 2.6 1.1 2.6 1.1 V2.2 H5 V2.6 H1.6 C1.6 2.6 0 2.4 0 5 C0 7.6 1.4 7.5 1.4 7.5 H2.3 V6.3 C2.3 6.3 2.2 4.9 3.7 4.9 H6.1 C6.1 4.9 7.5 4.9 7.5 3.5 V1.4 C7.5 1.4 7.7 0 4.9 0z" fill="#3d8fc9"/><path d="M5.1 10 C7.6 10 7.4 8.9 7.4 8.9 V7.8 H5 V7.4 H8.4 C8.4 7.4 10 7.6 10 5 C10 2.4 8.6 2.5 8.6 2.5 H7.7 V3.7 C7.7 3.7 7.8 5.1 6.3 5.1 H3.9 C3.9 5.1 2.5 5.1 2.5 6.5 V8.6 C2.5 8.6 2.3 10 5.1 10z" fill="#f5c52c"/></g></svg><span class="t" style="left:41.5px;top:261.0px;line-height:20px;font-size:12px;color:#6897bb;font-family:'Liberation Sans','Noto Sans CJK JP',sans-serif;letter-spacing:-0.394px;">basic2_10_unpack.py</span><svg style="left:23px;top:283px;" width="16" height="16" viewBox="0 0 16 16"><path d="M7.4 0.2 H12 V8 H2 V5.6 H7.4z" fill="#9aa7b0" fill-opacity=".7"/><path d="M6.4 0.2 L2 4.6 H6.4z" fill="#9aa7b0" fill-opacity=".9"/><rect x="0" y="8.6" width="15" height="6.6" fill="#3a8cc0" fill-opacity=".8"/><text x="7.5" y="14.3" font-size="6.4" font-weight="bold" font-family="Liberation Sans,sans-serif" fill="#1d2a33" text-anchor="middle" letter-spacing="0.5">MD</text></svg><span class="t" style="left:41.5px;top:281.0px;line-height:20px;font-size:12px;color:#6897bb;font-family:'Liberation Sans','Noto Sans CJK JP',sans-serif;letter-spacing:-0.307px;">readme.md</span><svg style="left:5px;top:304px;" width="16" height="16" viewBox="0 0 16 16"><path d="M0 0.2 H5.5 L7 2 H14 V10.8 H0z" fill="#9da1a5"/><circle cx="5.1" cy="6.3" r="1.7" fill="#3c3f41"/></svg><span class="t" style="left:23px;top:301.0px;line-height:20px;font-size:12px;color:#bbbbbb;font-family:'Liberation Sans','Noto Sans CJK JP',sans-serif;letter-spacing:-0.198px;">part3_structures</span><svg style="left:5px;top:324px;" width="16" height="16" viewBox="0 0 16 16"><path d="M0 0.2 H5.5 L7 2 H14 V10.8 H0z" fill="#9da1a5"/><circle cx="5.1" cy="6.3" r="1.7" fill="#3c3f41"/></svg><span class="t" style="left:23px;top:321.0px;line-height:20px;font-size:12px;color:#bbbbbb;font-family:'Liberation Sans','Noto Sans CJK JP',sans-serif;letter-spacing:-0.159px;">part4_dictionary</span><div class="a" style="left:14px;top:321px;width:55px;height:9px;background:rgba(128,132,135,0.42);"></div></div><div class="a" style="left:964px;top:58px;width:194px;height:26px;background:#4e5254;"></div><div class="a" style="left:964px;top:82px;width:194px;height:3px;background:#4a88c7;"></div><svg style="left:190.5px;top:63.5px;" width="16" height="16" viewBox="0 0 16 16"><path d="M7.4 0.2 H12 V8 H2 V5.6 H7.4z" fill="#9aa7b0" fill-opacity=".7"/><path d="M6.4 0.2 L2 4.6 H6.4z" fill="#9aa7b0" fill-opacity=".9"/><rect x="0" y="8.6" width="15" height="6.6" fill="#3a8cc0" fill-opacity=".8"/><text x="7.5" y="14.3" font-size="6.4" font-weight="bold" font-family="Liberation Sans,sans-serif" fill="#1d2a33" text-anchor="middle" letter-spacing="0.5">MD</text></svg><span class="t" style="left:210px;top:62.0px;line-height:20px;font-size:12px;color:#6897bb;font-family:'Liberation Sans','Noto Sans CJK JP',sans-serif;letter-spacing:-0.244px;">readme.md</span><svg style="left:275.3px;top:66.8px;" width="10" height="10" viewBox="0 0 10 10"><path d="M1.6 1.6 L8.4 8.4 M8.4 1.6 L1.6 8.4" stroke="#6e7173" stroke-width="1" fill="none"/></svg><svg style="left:301px;top:63.5px;" width="16" height="16" viewBox="0 0 16 16"><path d="M6.4 0.2 H11 V14 H1 V5.6 H6.4z" fill="#9aa7b0" fill-opacity=".7"/><path d="M5.4 0.2 L1 4.6 H5.4z" fill="#9aa7b0" fill-opacity=".9"/><rect x="4.6" y="6.4" width="7" height="8" fill="#3c3f41" fill-opacity=".55"/><g transform="translate(4.2 5.4) scale(1.0)"><path d="M4.9 0 C2.4 0 2.6 1.1 2.6 1.1 V2.2 H5 V2.6 H1.6 C1.6 2.6 0 2.4 0 5 C0 7.6 1.4 7.5 1.4 7.5 H2.3 V6.3 C2.3 6.3 2.2 4.9 3.7 4.9 H6.1 C6.1 4.9 7.5 4.9 7.5 3.5 V1.4 C7.5 1.4 7.7 0 4.9 0z" fill="#3d8fc9"/><path d="M5.1 10 C7.6 10 7.4 8.9 7.4 8.9 V7.8 H5 V7.4 H8.4 C8.4 7.4 10 7.6 10 5 C10 2.4 8.6 2.5 8.6 2.5 H7.7 V3.7 C7.7 3.7 7.8 5.1 6.3 5.1 H3.9 C3.9 5.1 2.5 5.1 2.5 6.5 V8.6 C2.5 8.6 2.3 10 5.1 10z" fill="#f5c52c"/></g></svg><span class="t" style="left:319.5px;top:62.0px;line-height:20px;font-size:12px;color:#6897bb;font-family:'Liberation Sans','Noto Sans CJK JP',sans-serif;letter-spacing:-0.329px;">basic2_01_list_for.py</span><svg style="left:431.8px;top:66.8px;" width="10" height="10" viewBox="0 0 10 10"><path d="M1.6 1.6 L8.4 8.4 M8.4 1.6 L1.6 8.4" stroke="#6e7173" stroke-width="1" fill="none"/></svg><svg style="left:457px;top:63.5px;" width="16" height="16" viewBox="0 0 16 16"><path d="M6.4 0.2 H11 V14 H1 V5.6 H6.4z" fill="#9aa7b0" fill-opacity=".7"/><path d="M5.4 0.2 L1 4.6 H5.4z" fill="#9aa7b0" fill-opacity=".9"/><rect x="4.6" y="6.4" width="7" height="8" fill="#3c3f41" fill-opacity=".55"/><g transform="translate(4.2 5.4) scale(1.0)"><path d="M4.9 0 C2.4 0 2.6 1.1 2.6 1.1 V2.2 H5 V2.6 H1.6 C1.6 2.6 0 2.4 0 5 C0 7.6 1.4 7.5 1.4 7.5 H2.3 V6.3 C2.3 6.3 2.2 4.9 3.7 4.9 H6.1 C6.1 4.9 7.5 4.9 7.5 3.5 V1.4 C7.5 1.4 7.7 0 4.9 0z" fill="#3d8fc9"/><path d="M5.1 10 C7.6 10 7.4 8.9 7.4 8.9 V7.8 H5 V7.4 H8.4 C8.4 7.4 10 7.6 10 5 C10 2.4 8.6 2.5 8.6 2.5 H7.7 V3.7 C7.7 3.7 7.8 5.1 6.3 5.1 H3.9 C3.9 5.1 2.5 5.1 2.5 6.5 V8.6 C2.5 8.6 2.3 10 5.1 10z" fill="#f5c52c"/></g></svg><span class="t" style="left:476.25px;top:62.0px;line-height:20px;font-size:12px;color:#629755;font-family:'Liberation Sans','Noto Sans CJK JP',sans-serif;letter-spacing:-0.371px;">basic2_02_list_append.py</span><svg style="left:612.8px;top:66.8px;" width="10" height="10" viewBox="0 0 10 10"><path d="M1.6 1.6 L8.4 8.4 M8.4 1.6 L1.6 8.4" stroke="#6e7173" stroke-width="1" fill="none"/></svg><svg style="left:639px;top:63.5px;" width="16" height="16" viewBox="0 0 16 16"><path d="M6.4 0.2 H11 V14 H1 V5.6 H6.4z" fill="#9aa7b0" fill-opacity=".7"/><path d="M5.4 0.2 L1 4.6 H5.4z" fill="#9aa7b0" fill-opacity=".9"/><rect x="4.6" y="6.4" width="7" height="8" fill="#3c3f41" fill-opacity=".55"/><g transform="translate(4.2 5.4) scale(1.0)"><path d="M4.9 0 C2.4 0 2.6 1.1 2.6 1.1 V2.2 H5 V2.6 H1.6 C1.6 2.6 0 2.4 0 5 C0 7.6 1.4 7.5 1.4 7.5 H2.3 V6.3 C2.3 6.3 2.2 4.9 3.7 4.9 H6.1 C6.1 4.9 7.5 4.9 7.5 3.5 V1.4 C7.5 1.4 7.7 0 4.9 0z" fill="#3d8fc9"/><path d="M5.1 10 C7.6 10 7.4 8.9 7.4 8.9 V7.8 H5 V7.4 H8.4 C8.4 7.4 10 7.6 10 5 C10 2.4 8.6 2.5 8.6 2.5 H7.7 V3.7 C7.7 3.7 7.8 5.1 6.3 5.1 H3.9 C3.9 5.1 2.5 5.1 2.5 6.5 V8.6 C2.5 8.6 2.3 10 5.1 10z" fill="#f5c52c"/></g></svg><span class="t" style="left:657px;top:62.0px;line-height:20px;font-size:12px;color:#6897bb;font-family:'Liberation Sans','Noto Sans CJK JP',sans-serif;letter-spacing:-0.420px;">basic2_03_list_slice.py</span><svg style="left:777.3px;top:66.8px;" width="10" height="10" viewBox="0 0 10 10"><path d="M1.6 1.6 L8.4 8.4 M8.4 1.6 L1.6 8.4" stroke="#6e7173" stroke-width="1" fill="none"/></svg><svg style="left:803px;top:63.5px;" width="16" height="16" viewBox="0 0 16 16"><path d="M6.4 0.2 H11 V14 H1 V5.6 H6.4z" fill="#9aa7b0" fill-opacity=".7"/><path d="M5.4 0.2 L1 4.6 H5.4z" fill="#9aa7b0" fill-opacity=".9"/><rect x="4.6" y="6.4" width="7" height="8" fill="#3c3f41" fill-opacity=".55"/><g transform="translate(4.2 5.4) scale(1.0)"><path d="M4.9 0 C2.4 0 2.6 1.1 2.6 1.1 V2.2 H5 V2.6 H1.6 C1.6 2.6 0 2.4 0 5 C0 7.6 1.4 7.5 1.4 7.5 H2.3 V6.3 C2.3 6.3 2.2 4.9 3.7 4.9 H6.1 C6.1 4.9 7.5 4.9 7.5 3.5 V1.4 C7.5 1.4 7.7 0 4.9 0z" fill="#3d8fc9"/><path d="M5.1 10 C7.6 10 7.4 8.9 7.4 8.9 V7.8 H5 V7.4 H8.4 C8.4 7.4 10 7.6 10 5 C10 2.4 8.6 2.5 8.6 2.5 H7.7 V3.7 C7.7 3.7 7.8 5.1 6.3 5.1 H3.9 C3.9 5.1 2.5 5.1 2.5 6.5 V8.6 C2.5 8.6 2.3 10 5.1 10z" fill="#f5c52c"/></g></svg><span class="t" style="left:821.5px;top:62.0px;line-height:20px;font-size:12px;color:#6897bb;font-family:'Liberation Sans','Noto Sans CJK JP',sans-serif;letter-spacing:-0.372px;">basic2_04_list_in_list.py</span><svg style="left:948.8px;top:66.8px;" width="10" height="10" viewBox="0 0 10 10"><path d="M1.6 1.6 L8.4 8.4 M8.4 1.6 L1.6 8.4" stroke="#6e7173" stroke-width="1" fill="none"/></svg><svg style="left:974px;top:63.5px;" width="16" height="16" viewBox="0 0 16 16"><path d="M6.4 0.2 H11 V14 H1 V5.6 H6.4z" fill="#9aa7b0" fill-opacity=".7"/><path d="M5.4 0.2 L1 4.6 H5.4z" fill="#9aa7b0" fill-opacity=".9"/><rect x="4.6" y="6.4" width="7" height="8" fill="#3c3f41" fill-opacity=".55"/><g transform="translate(4.2 5.4) scale(1.0)"><path d="M4.9 0 C2.4 0 2.6 1.1 2.6 1.1 V2.2 H5 V2.6 H1.6 C1.6 2.6 0 2.4 0 5 C0 7.6 1.4 7.5 1.4 7.5 H2.3 V6.3 C2.3 6.3 2.2 4.9 3.7 4.9 H6.1 C6.1 4.9 7.5 4.9 7.5 3.5 V1.4 C7.5 1.4 7.7 0 4.9 0z" fill="#3d8fc9"/><path d="M5.1 10 C7.6 10 7.4 8.9 7.4 8.9 V7.8 H5 V7.4 H8.4 C8.4 7.4 10 7.6 10 5 C10 2.4 8.6 2.5 8.6 2.5 H7.7 V3.7 C7.7 3.7 7.8 5.1 6.3 5.1 H3.9 C3.9 5.1 2.5 5.1 2.5 6.5 V8.6 C2.5 8.6 2.3 10 5.1 10z" fill="#f5c52c"/></g></svg><span class="t" style="left:992.5px;top:62.0px;line-height:20px;font-size:12px;color:#629755;font-family:'Liberation Sans','Noto Sans CJK JP',sans-serif;letter-spacing:-0.368px;">basic2_05_list_in_list_var.py</span><svg style="left:1141.1px;top:66.8px;" width="10" height="10" viewBox="0 0 10 10"><path d="M1.6 1.6 L8.4 8.4 M8.4 1.6 L1.6 8.4" stroke="#6e7173" stroke-width="1" fill="none"/></svg><div class="a" style="left:1333px;top:66px;width:3px;height:3px;border-radius:50%;background:#c3c5c6;"></div><div class="a" style="left:1333px;top:71px;width:3px;height:3px;border-radius:50%;background:#c3c5c6;"></div><div class="a" style="left:1333px;top:76px;width:3px;height:3px;border-radius:50%;background:#c3c5c6;"></div><span class="t" style="left:195px;top:88.5px;line-height:20px;font-size:13.33px;color:#606366;font-family:'Liberation Mono','Noto Sans CJK JP',monospace;transform:scaleY(1.1);transform-origin:0 13.55px;">1</span><span class="t" style="left:195px;top:112.5px;line-height:20px;font-size:13.33px;color:#606366;font-family:'Liberation Mono','Noto Sans CJK JP',monospace;transform:scaleY(1.1);transform-origin:0 13.55px;">2</span><span class="t" style="left:195px;top:136.5px;line-height:20px;font-size:13.33px;color:#606366;font-family:'Liberation Mono','Noto Sans CJK JP',monospace;transform:scaleY(1.1);transform-origin:0 13.55px;">3</span><span class="t" style="left:195px;top:160.5px;line-height:20px;font-size:13.33px;color:#606366;font-family:'Liberation Mono','Noto Sans CJK JP',monospace;transform:scaleY(1.1);transform-origin:0 13.55px;">4</span><span class="t" style="left:195px;top:184.5px;line-height:20px;font-size:13.33px;color:#a4a3a3;font-family:'Liberation Mono','Noto Sans CJK JP',monospace;transform:scaleY(1.1);transform-origin:0 13.55px;">5</span><span class="t" style="left:195px;top:208.5px;line-height:20px;font-size:13.33px;color:#606366;font-family:'Liberation Mono','Noto Sans CJK JP',monospace;transform:scaleY(1.1);transform-origin:0 13.55px;">6</span><span class="t" style="left:195px;top:232.5px;line-height:20px;font-size:13.33px;color:#606366;font-family:'Liberation Mono','Noto Sans CJK JP',monospace;transform:scaleY(1.1);transform-origin:0 13.55px;">7</span><span class="t" style="left:195px;top:256.5px;line-height:20px;font-size:13.33px;color:#606366;font-family:'Liberation Mono','Noto Sans CJK JP',monospace;transform:scaleY(1.1);transform-origin:0 13.55px;">8</span><span class="t" style="left:195px;top:280.5px;line-height:20px;font-size:13.33px;color:#606366;font-family:'Liberation Mono','Noto Sans CJK JP',monospace;transform:scaleY(1.1);transform-origin:0 13.55px;">9</span><span class="t" style="left:187px;top:304.5px;line-height:20px;font-size:13.33px;color:#606366;font-family:'Liberation Mono','Noto Sans CJK JP',monospace;transform:scaleY(1.1);transform-origin:0 13.55px;">10</span><span class="t" style="left:187px;top:328.5px;line-height:20px;font-size:13.33px;color:#606366;font-family:'Liberation Mono','Noto Sans CJK JP',monospace;transform:scaleY(1.1);transform-origin:0 13.55px;">11</span><span class="t" style="left:187px;top:352.5px;line-height:20px;font-size:13.33px;color:#606366;font-family:'Liberation Mono','Noto Sans CJK JP',monospace;transform:scaleY(1.1);transform-origin:0 13.55px;">12</span><span class="t" style="left:187px;top:376.5px;line-height:20px;font-size:13.33px;color:#606366;font-family:'Liberation Mono','Noto Sans CJK JP',monospace;transform:scaleY(1.1);transform-origin:0 13.55px;">13</span><span class="t" style="left:252px;top:88.5px;line-height:20px;font-size:13.33px;color:#5f9352;font-family:'Liberation Mono','Noto Sans CJK JP',monospace;transform:scaleY(1.1);transform-origin:0 13.55px;font-style:italic;">"""</span><span class="t" style="left:252px;top:112.5px;line-height:20px;font-size:13.5px;color:#5f9352;font-family:'Liberation Mono','Noto Sans CJK JP',monospace;letter-spacing:0.583px;transform:scaleY(1.1);transform-origin:0 13.55px;font-style:italic;">リスト内の要素は何でも良いです。</span><span class="t" style="left:252px;top:136.5px;line-height:20px;font-size:13.5px;color:#5f9352;font-family:'Liberation Mono','Noto Sans CJK JP',monospace;letter-spacing:0.604px;transform:scaleY(1.1);transform-origin:0 13.55px;font-style:italic;">もちろん、リスト内にリストを含むこともできます。</span><span class="t" style="left:252px;top:184.5px;line-height:20px;font-size:13.5px;color:#5f9352;font-family:'Liberation Mono','Noto Sans CJK JP',monospace;letter-spacing:0.538px;transform:scaleY(1.1);transform-origin:0 13.55px;font-style:italic;">以下のサンプルコードでは、さきほどのサンプルコードを、変数を使って書き換えました。</span><span class="t" style="left:252px;top:232.5px;line-height:20px;font-size:13.33px;color:#5f9352;font-family:'Liberation Mono','Noto Sans CJK JP',monospace;transform:scaleY(1.1);transform-origin:0 13.55px;font-style:italic;">q1 = ["jan", "feb", "mar", ]</span><span class="t" style="left:252px;top:256.5px;line-height:20px;font-size:13.33px;color:#5f9352;font-family:'Liberation Mono','Noto Sans CJK JP',monospace;transform:scaleY(1.1);transform-origin:0 13.55px;font-style:italic;">q2 = ["apr", "may", "jun", ]</span><span class="t" style="left:252px;top:280.5px;line-height:20px;font-size:13.33px;color:#5f9352;font-family:'Liberation Mono','Noto Sans CJK JP',monospace;transform:scaleY(1.1);transform-origin:0 13.55px;font-style:italic;">q3 = ["jul", "aug", "sep", ]</span><span class="t" style="left:252px;top:304.5px;line-height:20px;font-size:13.33px;color:#5f9352;font-family:'Liberation Mono','Noto Sans CJK JP',monospace;transform:scaleY(1.1);transform-origin:0 13.55px;font-style:italic;">q4 = ["oct", "nov", "dec", ]</span><span class="t" style="left:252px;top:328.5px;line-height:20px;font-size:13.33px;color:#5f9352;font-family:'Liberation Mono','Noto Sans CJK JP',monospace;transform:scaleY(1.1);transform-origin:0 13.55px;font-style:italic;">all_quoters = [q1, q2, q3, q4,]</span><span class="t" style="left:252px;top:376.5px;line-height:20px;font-size:13.33px;color:#5f9352;font-family:'Liberation Mono','Noto Sans CJK JP',monospace;transform:scaleY(1.1);transform-origin:0 13.55px;font-style:italic;">all_quoters = [</span><div class="a" style="left:251px;top:183px;width:2px;height:20px;background:#bbbbbb;"></div><svg style="left:239px;top:92.5px;" width="12" height="12" viewBox="0 0 12 12"><path d="M0.5 0.5 H10.7 V6.6 L5.6 11 L0.5 6.6z" fill="#2b2b2b" stroke="#6a6d70" stroke-width="1"/><path d="M3 5 H8.2" stroke="#8a8d90" stroke-width="1"/></svg><svg style="left:259.5px;top:165.5px;" width="12" height="15" viewBox="0 0 12 15"><path d="M5.5 0.2 A5.3 5.3 0 0 1 8.4 9.9 V10.6 H2.6 V9.9 A5.3 5.3 0 0 1 5.5 0.2z" fill="#f2a93b"/><path d="M2.8 11.9 H8.2 M2.8 13.8 H8.2" stroke="#d0d2d3" stroke-width="1"/></svg><svg style="left:1278px;top:92px;" width="14" height="14" viewBox="0 0 14 14"><path d="M1.6 6 L4.8 9.2 L11.6 1.8" stroke="#499c54" stroke-width="2.3" fill="none"/><path d="M0.6 11.8 l1.6 -1.3 l1.6 1.3 l1.6 -1.3 l1.6 1.3 l1.6 -1.3 l1.6 1.3" stroke="#499c54" stroke-width="1" fill="none"/></svg><span class="t" style="left:1293px;top:88.0px;line-height:20px;font-size:12px;color:#bbbbbb;font-family:'Liberation Sans','Noto Sans CJK JP',sans-serif;">2</span><svg style="left:1309px;top:94px;" width="9" height="6" viewBox="0 0 9 6"><path d="M0.7 5.3 L4.5 1.2 L8.3 5.3" stroke="#c3c5c6" stroke-width="1.4" fill="none"/></svg><svg style="left:1330px;top:95px;" width="9" height="6" viewBox="0 0 9 6"><path d="M0.7 0.7 L4.5 4.8 L8.3 0.7" stroke="#c3c5c6" stroke-width="1.4" fill="none"/></svg><div class="a" style="left:1339px;top:112px;width:7px;height:74px;background:rgba(128,132,135,0.45);"></div><div class="a" style="left:182px;top:392px;width:1165px;height:23px;background:#313335;"></div><div class="a" style="left:182px;top:392px;width:1165px;height:1px;background:#45484a;"></div><div class="a" style="left:22px;top:245px;width:186px;height:20px;background:#0d293e;"></div><svg style="left:46px;top:248px;" width="16" height="16" viewBox="0 0 16 16"><path d="M6.4 0.2 H11 V14 H1 V5.6 H6.4z" fill="#9aa7b0" fill-opacity=".7"/><path d="M5.4 0.2 L1 4.6 H5.4z" fill="#9aa7b0" fill-opacity=".9"/><rect x="4.6" y="6.4" width="7" height="8" fill="#3c3f41" fill-opacity=".55"/><g transform="translate(4.2 5.4) scale(1.0)"><path d="M4.9 0 C2.4 0 2.6 1.1 2.6 1.1 V2.2 H5 V2.6 H1.6 C1.6 2.6 0 2.4 0 5 C0 7.6 1.4 7.5 1.4 7.5 H2.3 V6.3 C2.3 6.3 2.2 4.9 3.7 4.9 H6.1 C6.1 4.9 7.5 4.9 7.5 3.5 V1.4 C7.5 1.4 7.7 0 4.9 0z" fill="#3d8fc9"/><path d="M5.1 10 C7.6 10 7.4 8.9 7.4 8.9 V7.8 H5 V7.4 H8.4 C8.4 7.4 10 7.6 10 5 C10 2.4 8.6 2.5 8.6 2.5 H7.7 V3.7 C7.7 3.7 7.8 5.1 6.3 5.1 H3.9 C3.9 5.1 2.5 5.1 2.5 6.5 V8.6 C2.5 8.6 2.3 10 5.1 10z" fill="#f5c52c"/></g></svg><span class="t" style="left:63.5px;top:246.0px;line-height:20px;font-size:12px;color:#629755;font-family:'Liberation Sans','Noto Sans CJK JP',sans-serif;letter-spacing:-0.378px;">basic2_05_list_in_list_var.py</span><div class="a" style="left:172px;top:86px;width:8px;height:218px;background:rgba(128,132,135,0.42);"></div><svg style="left:135px;top:254px;" width="14" height="20" viewBox="0 0 14 20"><path d="M1 1 V16.2 L4.6 12.8 L7.4 19 L9.8 18 L7.1 12 H12z" fill="#ffffff" stroke="#000000" stroke-width="0.9" stroke-linejoin="round"/></svg><span class="t" style="left:28.5px;top:420.0px;line-height:20px;font-size:12px;color:#bbbbbb;font-family:'Liberation Sans','Noto Sans CJK JP',sans-serif;letter-spacing:-0.321px;">Debug:</span><svg style="left:86px;top:422px;" width="16" height="16" viewBox="0 0 16 16"><g transform="translate(0.5 0.5) scale(1.45)"><path d="M4.9 0 C2.4 0 2.6 1.1 2.6 1.1 V2.2 H5 V2.6 H1.6 C1.6 2.6 0 2.4 0 5 C0 7.6 1.4 7.5 1.4 7.5 H2.3 V6.3 C2.3 6.3 2.2 4.9 3.7 4.9 H6.1 C6.1 4.9 7.5 4.9 7.5 3.5 V1.4 C7.5 1.4 7.7 0 4.9 0z" fill="#3d8fc9"/><path d="M5.1 10 C7.6 10 7.4 8.9 7.4 8.9 V7.8 H5 V7.4 H8.4 C8.4 7.4 10 7.6 10 5 C10 2.4 8.6 2.5 8.6 2.5 H7.7 V3.7 C7.7 3.7 7.8 5.1 6.3 5.1 H3.9 C3.9 5.1 2.5 5.1 2.5 6.5 V8.6 C2.5 8.6 2.3 10 5.1 10z" fill="#f5c52c"/></g><circle cx="13.2" cy="13.8" r="2.7" fill="#3c3f41"/><circle cx="13.2" cy="13.8" r="2" fill="#1fd11f"/></svg><span class="t" style="left:105.5px;top:420.0px;line-height:20px;font-size:12px;color:#bbbbbb;font-family:'Liberation Sans','Noto Sans CJK JP',sans-serif;letter-spacing:-0.430px;">basic2_05_list_in_list_var</span><svg style="left:237.6px;top:425px;" width="10" height="10" viewBox="0 0 10 10"><path d="M0.9000000000000004 0.9000000000000004 L9.1 9.1 M9.1 0.9000000000000004 L0.9000000000000004 9.1" stroke="#6e7173" stroke-width="1" fill="none"/></svg><div class="a" style="left:73.5px;top:439.8px;width:183px;height:3px;background:#747a80;border-radius:1.5px;"></div><svg style="left:1300.8px;top:421.8px;" width="14" height="14" viewBox="0 0 16 16"><path d="M6.65 2.98 L6.87 0.89 L9.13 0.89 L9.35 2.98 L11.68 4.32 L13.60 3.47 L14.72 5.42 L13.02 6.65 L13.02 9.35 L14.72 10.58 L13.60 12.53 L11.68 11.68 L9.35 13.02 L9.13 15.11 L6.87 15.11 L6.65 13.02 L4.32 11.68 L2.40 12.53 L1.28 10.58 L2.98 9.35 L2.98 6.65 L1.28 5.42 L2.40 3.47 L4.32 4.32z M8 5.7 a2.3 2.3 0 1 0 0.001 0z" fill="#c3c5c6" fill-rule="evenodd" stroke="#c3c5c6" stroke-width="0.8" stroke-linejoin="round"/></svg><div class="a" style="left:1328px;top:427.6px;width:12px;height:2.2px;background:#c3c5c6;"></div><div class="a" style="left:50px;top:443px;width:1px;height:234px;background:#323232;"></div><div class="a" style="left:51px;top:443px;width:1296px;height:27px;background:#3c3f41;"></div><div class="a" style="left:51px;top:470px;width:1296px;height:1px;background:#313335;"></div><div class="a" style="left:51px;top:471px;width:29px;height:206px;background:#3c3f41;"></div><svg style="left:29px;top:450px;" width="15" height="15" viewBox="0 0 15 15"><path d="M10.6 4.4 A5 5 0 1 0 11.6 9.4" stroke="#499c54" stroke-width="2" fill="none"/><path d="M7.8 0.4 L13.2 4.4 L7.8 8.2z" fill="#499c54"/><rect x="8.2" y="8.8" width="5.2" height="5.2" fill="#aeb1b3"/></svg><svg style="left:29px;top:476px;" width="14" height="14" viewBox="0 0 14 14"><path d="M9.6 0.8 a4 4 0 0 0 -3.6 5.6 L0.8 11.6 a1.2 1.2 0 0 0 1.8 1.8 L7.8 8.2 a4 4 0 0 0 5.4 -4.4 L10.8 6.2 L8.4 5.6 L7.9 3.3z" fill="#c3c5c6"/></svg><div class="a" style="left:26px;top:499.5px;width:20px;height:1px;background:#505355;"></div><svg style="left:30px;top:509px;" width="13" height="14" viewBox="0 0 13 14"><rect x="0.5" y="1" width="2.4" height="12" fill="#499c54"/><path d="M4.6 1 L12.6 7 L4.6 13z" fill="#499c54"/></svg><svg style="left:31px;top:535px;" width="10" height="12" viewBox="0 0 10 12"><rect x="1" y="0.5" width="2.6" height="11" fill="#5a5d5f"/><rect x="6.2" y="0.5" width="2.6" height="11" fill="#5a5d5f"/></svg><div class="a" style="left:31px;top:563px;width:10.5px;height:10.5px;background:#c75450;"></div><div class="a" style="left:26px;top:583.5px;width:20px;height:1px;background:#505355;"></div><svg style="left:29px;top:593px;" width="15" height="15" viewBox="0 0 15 15"><circle cx="9.6" cy="5" r="4.4" fill="#c75450"/><circle cx="5.2" cy="9.4" r="5.2" fill="#3c3f41"/><circle cx="5.2" cy="9.4" r="4.4" fill="#c75450"/></svg><svg style="left:29px;top:620px;" width="15" height="15" viewBox="0 0 15 15"><circle cx="7" cy="7.2" r="4.9" fill="#c75450"/><path d="M1 13.4 L13.2 1" stroke="#3c3f41" stroke-width="3.6"/><path d="M1 13.4 L13.2 1" stroke="#a6a9ab" stroke-width="1.3"/></svg><div class="a" style="left:26px;top:643px;width:20px;height:1px;background:#505355;"></div><svg style="left:32.5px;top:664px;" width="9" height="8" viewBox="0 0 9 8"><path d="M0.6 1.2 L3.2 3.8 L0.6 6.4 M4.6 1.2 L7.2 3.8 L4.6 6.4" stroke="#9da1a5" stroke-width="1.1" fill="none"/></svg><svg style="left:61.5px;top:664px;" width="9" height="8" viewBox="0 0 9 8"><path d="M0.6 1.2 L3.2 3.8 L0.6 6.4 M4.6 1.2 L7.2 3.8 L4.6 6.4" stroke="#9da1a5" stroke-width="1.1" fill="none"/></svg><span class="t" style="left:64.6px;top:447.0px;line-height:20px;font-size:12px;color:#bbbbbb;font-family:'Liberation Sans','Noto Sans CJK JP',sans-serif;letter-spacing:-0.788px;">Debugger</span><span class="t" style="left:137.3px;top:447.0px;line-height:20px;font-size:12px;color:#bbbbbb;font-family:'Liberation Sans','Noto Sans CJK JP',sans-serif;letter-spacing:-0.905px;">Console</span><div class="a" style="left:124.5px;top:468.5px;width:64.5px;height:2.5px;background:#747a80;"></div><svg style="left:195px;top:450px;" width="13" height="12" viewBox="0 0 13 12"><path d="M0 1.7 H12.6 M0 10.5 H12.6" stroke="#b4b6b8" stroke-width="1.8"/><path d="M0 6.1 H12.6" stroke="#3592c4" stroke-width="2.2"/></svg><div class="a" style="left:217px;top:447px;width:1px;height:20px;background:#4b4d4f;"></div><svg style="left:227px;top:449px;" width="15" height="14" viewBox="0 0 15 14"><path d="M1.6 7.6 L6.4 2.4 L11.2 7.4" stroke="#3592c4" stroke-width="1.9" fill="none"/><path d="M8.6 9.6 H13.8 V4.2z" fill="#3592c4"/><path d="M1 11.8 H13.4" stroke="#b4b6b8" stroke-width="1.6"/></svg><svg style="left:254px;top:449px;" width="13" height="14" viewBox="0 0 13 14"><path d="M6.4 0 V7" stroke="#3592c4" stroke-width="2"/><path d="M1.6 5 H11.2 L6.4 9.6z" fill="#3592c4"/><path d="M0 11.8 H12.5" stroke="#b4b6b8" stroke-width="1.6"/></svg><svg style="left:279px;top:449px;" width="14" height="14" viewBox="0 0 14 14"><path d="M9 0 V7" stroke="#3592c4" stroke-width="2"/><path d="M4.2 5 H13.8 L9 9.6z" fill="#3592c4"/><path d="M1 11.8 H13.6" stroke="#b4b6b8" stroke-width="1.6"/><path d="M0.7 1.8 H5 M0.7 3.8 H5 M0.7 5.6 H3.4" stroke="#b4b6b8" stroke-width="0.9"/></svg><svg style="left:305px;top:449px;" width="14" height="14" viewBox="0 0 14 14"><path d="M7.2 9.8 V4.5" stroke="#3592c4" stroke-width="2"/><path d="M2.2 5.6 H12.2 L7.2 0.8z" fill="#3592c4"/><path d="M1.2 11.8 H13.6" stroke="#b4b6b8" stroke-width="1.6"/></svg><svg style="left:332px;top:449px;" width="15" height="15" viewBox="0 0 15 15"><path d="M0.6 1.4 L5 5.8" stroke="#3592c4" stroke-width="2"/><path d="M7.4 2.2 V8.2 H1.4z" fill="#3592c4"/><path d="M8.4 6.8 H13.4 M8.4 13.4 H13.4 M10.9 6.8 V13.4" stroke="#b4b6b8" stroke-width="1.1" fill="none"/></svg><div class="a" style="left:354px;top:447px;width:1px;height:20px;background:#4b4d4f;"></div><svg style="left:365.5px;top:450px;" width="13" height="12" viewBox="0 0 13 12"><path d="M0.3 0.3 H12.3 V11.3 H0.3z" fill="#b4b6b8"/><path d="M2 4 H11 M2 6.6 H11 M2 9.2 H11 M4.4 4 V11 M8.6 4 V11" stroke="#3c3f41" stroke-width="1"/><rect x="1.8" y="1.6" width="9.4" height="1.4" fill="#3c3f41"/></svg><svg style="left:1329px;top:451px;" width="18" height="16" viewBox="0 0 18 16"><rect x="0" y="0.4" width="5.6" height="4.4" fill="#b4b6b8"/><rect x="6.6" y="0.4" width="5.4" height="4.4" fill="#b4b6b8"/><rect x="0" y="5.8" width="12" height="4.2" fill="#b4b6b8"/><path d="M11 12 H16.4 L13.7 14.8z" fill="#b4b6b8"/></svg><svg style="left:60px;top:480px;" width="10" height="12" viewBox="0 0 10 12"><path d="M5 11.5 V2.5 M1 6 L5 1.6 L9 6" stroke="#5e6163" stroke-width="1.4" fill="none"/></svg><svg style="left:60px;top:506px;" width="10" height="12" viewBox="0 0 10 12"><path d="M5 0.5 V9.5 M1 6 L5 10.4 L9 6" stroke="#5e6163" stroke-width="1.4" fill="none"/></svg><svg style="left:58px;top:532px;" width="14" height="13" viewBox="0 0 14 13"><path d="M0.5 1.5 H13.5" stroke="#b4b6b8" stroke-width="1.6"/><path d="M0.5 6.5 H10.2 A2.4 2.4 0 0 1 10.2 11.3 H7.6" stroke="#b4b6b8" stroke-width="1.6" fill="none"/><path d="M8.6 8.6 L5.6 11.3 L8.6 14z" fill="#b4b6b8"/><path d="M0.5 11.3 H4" stroke="#b4b6b8" stroke-width="1.6"/></svg><div class="a" style="left:54px;top:553px;width:22px;height:22px;background:#5c6164;border-radius:3px;"></div><svg style="left:58px;top:557px;" width="14" height="13" viewBox="0 0 14 13"><path d="M0.5 12 H13.5" stroke="#b4b6b8" stroke-width="1.8"/><path d="M0.5 3 H5 M0.5 7 H5" stroke="#b4b6b8" stroke-width="1.6"/><path d="M10 0.5 V6" stroke="#b4b6b8" stroke-width="1.8"/><path d="M6.4 5 H13.6 L10 9.4z" fill="#b4b6b8"/></svg><svg style="left:58px;top:584px;" width="14" height="13" viewBox="0 0 14 13"><rect x="3" y="0.5" width="8" height="3" fill="#b4b6b8"/><path d="M0.5 4.5 H13.5 V10 H11 V8 H3 V10 H0.5z" fill="#b4b6b8"/><rect x="3.8" y="9" width="6.4" height="3.6" fill="none" stroke="#b4b6b8" stroke-width="1.2"/></svg><svg style="left:59px;top:608px;" width="12" height="14" viewBox="0 0 12 14"><path d="M0.8 2.6 H11.2 M4.2 2.4 V0.8 H7.8 V2.4" stroke="#b4b6b8" stroke-width="1.5" fill="none"/><path d="M1.8 4.4 H10.2 V13.5 H1.8z" fill="#b4b6b8"/></svg><svg style="left:58px;top:637px;" width="14" height="10" viewBox="0 0 14 10"><path d="M0.4 0.8 L4.6 5 L0.4 9.2z" fill="#b4b6b8"/><path d="M5.4 0.8 L9.2 5 L5.4 9.2 M9.6 0.8 L13.4 5 L9.6 9.2" stroke="#b4b6b8" stroke-width="1.3" fill="none"/></svg><span class="t" style="left:80.2px;top:474.5px;line-height:20px;font-size:13.33px;color:#bbbbbb;font-family:'Liberation Mono','Noto Sans CJK JP',monospace;letter-spacing:0.013px;transform:scaleY(1.1);transform-origin:0 13.55px;">D:\projects\python_basic_sec1\venv\Scripts\python.exe "C:\Program Files\JetBrains\PyCharm 2022.1.1\plugins\python\helpers\pydev\pydevd.py" --multiprocess --qt</span><span class="t" style="left:80.2px;top:498.5px;line-height:20px;font-size:13.33px;color:#bbbbbb;font-family:'Liberation Mono','Noto Sans CJK JP',monospace;transform:scaleY(1.1);transform-origin:0 13.55px;">Connected to pydev debugger (build 221.5591.52)</span><span class="t" style="left:80px;top:546.5px;line-height:20px;font-size:13.33px;color:#1f7d1f;font-family:'Liberation Mono','Noto Sans CJK JP',monospace;transform:scaleY(1.1);transform-origin:0 13.55px;">&gt;&gt;&gt;</span><div class="a" style="left:80px;top:668px;width:672px;height:8px;background:#565859;"></div><svg style="left:1352px;top:70px;" width="14" height="14" viewBox="0 0 14 14"><path d="M6 1.2 Q10.6 1.2 10.6 6.4 V8.4 L12.2 10.8 H-0.2 L1.4 8.4 V6.4 Q1.4 1.2 6 1.2z" fill="#c3c5c6"/><path d="M4.4 11.6 H7.6 L6 13z" fill="#c3c5c6"/><circle cx="10.6" cy="2.4" r="2.6" fill="#db5860"/></svg><span class="t" style="left:1366.7px;top:87.3px;transform:rotate(90deg);transform-origin:0 0;line-height:20px;font-size:12px;color:#bbbbbb;font-family:'Liberation Sans','Noto Sans CJK JP',sans-serif;letter-spacing:-0.448px;">Notifications</span><svg style="left:1352px;top:169px;" width="13" height="13" viewBox="0 0 13 13"><path d="M1 2.2 Q6.5 -1.4 12 2.2 V10.8 Q6.5 14.4 1 10.8z" fill="#c3c5c6"/><path d="M1 4.6 Q6.5 8 12 4.6 M1 7.6 Q6.5 11 12 7.6" stroke="#3c3f41" stroke-width="1" fill="none"/></svg><span class="t" style="left:1366.7px;top:186.6px;transform:rotate(90deg);transform-origin:0 0;line-height:20px;font-size:12px;color:#bbbbbb;font-family:'Liberation Sans','Noto Sans CJK JP',sans-serif;letter-spacing:-0.811px;">Database</span><svg style="left:1352px;top:255.5px;" width="13" height="10" viewBox="0 0 13 10"><path d="M0 0 H12.5 V2.6 H0z M0 3.9 H12.5 V9.8 H0z" fill="#c3c5c6"/><path d="M3.1 3.9 V9.8 M6.25 3.9 V9.8 M9.4 3.9 V9.8 M0 6.85 H12.5" stroke="#3c3f41" stroke-width="1"/></svg><span class="t" style="left:1366.7px;top:270.5px;transform:rotate(90deg);transform-origin:0 0;line-height:20px;font-size:12px;color:#bbbbbb;font-family:'Liberation Sans','Noto Sans CJK JP',sans-serif;letter-spacing:-0.745px;">SciView</span><div class="a" style="left:72px;top:678px;width:67px;height:21px;background:#2d2f30;"></div><svg style="left:31px;top:683px;" width="10" height="13" viewBox="0 0 10 13"><circle cx="2.4" cy="2.2" r="1.8" fill="#b2b4b6"/><circle cx="2.4" cy="10.6" r="1.8" fill="#b2b4b6"/><circle cx="7.8" cy="3.4" r="1.8" fill="#b2b4b6"/><path d="M2.4 2 V10.6 M7.8 3.6 Q7.8 7 2.6 8" stroke="#b2b4b6" stroke-width="1.5" fill="none"/></svg><span class="t" style="left:47.4px;top:680.0px;line-height:20px;font-size:12px;color:#bbbbbb;font-family:'Liberation Sans','Noto Sans CJK JP',sans-serif;letter-spacing:-0.372px;">Git</span><svg style="left:81px;top:683px;" width="14" height="14" viewBox="0 0 14 14"><path d="M6.6 2.4 C9.6 2.4 10.6 4.6 10.6 7.4 C10.6 10.6 9 12.4 6.6 12.4 C4.2 12.4 2.6 10.6 2.6 7.4 C2.6 4.6 3.6 2.4 6.6 2.4z" fill="#b2b4b6"/><path d="M4.6 3 L3.4 1 M8.6 3 L9.8 1 M3 5.6 H0.8 M2.8 8 H0.6 M3.4 10.4 L1.6 12 M10.2 5.6 H12.4 M10.4 8 H12.6 M9.8 10.4 L11.6 12" stroke="#b2b4b6" stroke-width="1.5" fill="none"/><circle cx="11.2" cy="11.6" r="2.5" fill="#2d2f30"/><circle cx="11.2" cy="11.6" r="1.9" fill="#1fd11f"/></svg><span class="t" style="left:98.6px;top:680.0px;line-height:20px;font-size:12px;color:#e8e8e8;font-family:'Liberation Sans','Noto Sans CJK JP',sans-serif;letter-spacing:-0.894px;">Debug</span><svg style="left:151.5px;top:684px;" width="13" height="12" viewBox="0 0 13 12"><path d="M6.5 0.3 L12.6 3.3 L6.5 6.3 L0.4 3.3z" fill="#b2b4b6"/><path d="M0.8 6 L6.5 8.8 L12.2 6 M0.8 8.6 L6.5 11.4 L12.2 8.6" stroke="#b2b4b6" stroke-width="1.3" fill="none"/></svg><span class="t" style="left:168.5px;top:680.0px;line-height:20px;font-size:12px;color:#bbbbbb;font-family:'Liberation Sans','Noto Sans CJK JP',sans-serif;letter-spacing:-0.958px;">Python Packages</span><svg style="left:273px;top:685px;" width="11" height="10" viewBox="0 0 11 10"><path d="M0 1 H2 M0 5 H2 M0 9 H2" stroke="#b2b4b6" stroke-width="1.8"/><path d="M3.6 1 H11 M3.6 5 H11 M3.6 9 H11" stroke="#b2b4b6" stroke-width="1.8"/></svg><span class="t" style="left:288.5px;top:680.0px;line-height:20px;font-size:12px;color:#bbbbbb;font-family:'Liberation Sans','Noto Sans CJK JP',sans-serif;letter-spacing:-1.484px;">TODO</span><svg style="left:340px;top:684px;" width="13" height="13" viewBox="0 0 13 13"><g transform="translate(0.2 0.4) scale(1.22)"><path d="M4.9 0 C2.4 0 2.6 1.1 2.6 1.1 V2.2 H5 V2.6 H1.6 C1.6 2.6 0 2.4 0 5 C0 7.6 1.4 7.5 1.4 7.5 H2.3 V6.3 C2.3 6.3 2.2 4.9 3.7 4.9 H6.1 C6.1 4.9 7.5 4.9 7.5 3.5 V1.4 C7.5 1.4 7.7 0 4.9 0z" fill="#b2b4b6"/><path d="M5.1 10 C7.6 10 7.4 8.9 7.4 8.9 V7.8 H5 V7.4 H8.4 C8.4 7.4 10 7.6 10 5 C10 2.4 8.6 2.5 8.6 2.5 H7.7 V3.7 C7.7 3.7 7.8 5.1 6.3 5.1 H3.9 C3.9 5.1 2.5 5.1 2.5 6.5 V8.6 C2.5 8.6 2.3 10 5.1 10z" fill="#b2b4b6"/></g></svg><span class="t" style="left:356.5px;top:680.0px;line-height:20px;font-size:12px;color:#bbbbbb;font-family:'Liberation Sans','Noto Sans CJK JP',sans-serif;letter-spacing:-0.787px;">Python Console</span><svg style="left:456px;top:684px;" width="11" height="11" viewBox="0 0 11 11"><circle cx="5.3" cy="5.3" r="5.2" fill="#b2b4b6"/><path d="M5.3 2.2 V6" stroke="#3c3f41" stroke-width="1.6"/><circle cx="5.3" cy="8" r="0.9" fill="#3c3f41"/></svg><span class="t" style="left:472px;top:680.0px;line-height:20px;font-size:12px;color:#bbbbbb;font-family:'Liberation Sans','Noto Sans CJK JP',sans-serif;letter-spacing:-0.884px;">Problems</span><svg style="left:538.5px;top:684px;" width="12" height="11" viewBox="0 0 12 11"><rect x="0" y="0" width="11.5" height="10.5" fill="#b2b4b6"/><path d="M2 2.6 L4.6 5 L2 7.4 M5.6 7.8 H9" stroke="#3c3f41" stroke-width="1.2" fill="none"/></svg><span class="t" style="left:555px;top:680.0px;line-height:20px;font-size:12px;color:#bbbbbb;font-family:'Liberation Sans','Noto Sans CJK JP',sans-serif;letter-spacing:-0.408px;">Terminal</span><svg style="left:619px;top:684px;" width="12" height="12" viewBox="0 0 12 12"><circle cx="6" cy="6" r="5.8" fill="#b2b4b6"/><path d="M4.4 3.2 L9 6 L4.4 8.8z" fill="#3c3f41"/></svg><span class="t" style="left:636px;top:680.0px;line-height:20px;font-size:12px;color:#bbbbbb;font-family:'Liberation Sans','Noto Sans CJK JP',sans-serif;letter-spacing:-0.931px;">Services</span><svg style="left:5.5px;top:704px;" width="13" height="12" viewBox="0 0 13 12"><path d="M3 0.5 H12 V8.5 H3z" fill="none" stroke="#b2b4b6" stroke-width="1"/><path d="M0.8 3 V11.2 H10" fill="none" stroke="#b2b4b6" stroke-width="1"/></svg><span class="t" style="left:27.5px;top:699.5px;line-height:20px;font-size:12px;color:#bbbbbb;font-family:'Liberation Sans','Noto Sans CJK JP',sans-serif;letter-spacing:-0.130px;">Breakpoint reached (2 minutes ago)</span><svg style="left:789px;top:703.5px;" width="13" height="13" viewBox="0 0 13 13"><defs><linearGradient id="tn" x1="0" y1="0" x2="1" y2="1"><stop offset="0" stop-color="#d94cf0"/><stop offset="1" stop-color="#5a6cf0"/></linearGradient></defs><path d="M6.5 0.6 L12 3.6 V9.6 L6.5 12.6 L1 9.6 V3.6z" fill="none" stroke="url(#tn)" stroke-width="1.5"/><path d="M4.4 4.4 L9 6.6 L4.4 9z" fill="none" stroke="url(#tn)" stroke-width="1.1"/></svg><span class="t" style="left:806.5px;top:699.2px;line-height:20px;font-size:13.5px;color:#d0d0d0;font-family:'Liberation Sans','Noto Sans CJK JP',sans-serif;letter-spacing:0.784px;">tabnine</span><span class="t" style="left:859px;top:699.5px;line-height:20px;font-size:12px;color:#e6e6e6;font-family:'Liberation Sans','Noto Sans CJK JP',sans-serif;letter-spacing:-0.031px;font-weight:bold;">Starter</span><span class="t" style="left:910.5px;top:699.5px;line-height:20px;font-size:12px;color:#bbbbbb;font-family:'Liberation Sans','Noto Sans CJK JP',sans-serif;letter-spacing:-1.094px;">5:1</span><span class="t" style="left:937.5px;top:699.5px;line-height:20px;font-size:12px;color:#bbbbbb;font-family:'Liberation Sans','Noto Sans CJK JP',sans-serif;letter-spacing:-1.948px;">CRLF</span><span class="t" style="left:975.5px;top:699.5px;line-height:20px;font-size:12px;color:#bbbbbb;font-family:'Liberation Sans','Noto Sans CJK JP',sans-serif;letter-spacing:-0.625px;">UTF-8</span><span class="t" style="left:1018px;top:699.5px;line-height:20px;font-size:12px;color:#bbbbbb;font-family:'Liberation Sans','Noto Sans CJK JP',sans-serif;letter-spacing:-0.504px;">4 spaces</span><span class="t" style="left:1074.5px;top:699.5px;line-height:20px;font-size:12px;color:#bbbbbb;font-family:'Liberation Sans','Noto Sans CJK JP',sans-serif;letter-spacing:-0.237px;">Python 3.10 (python_basic_sec1)</span><svg style="left:1259px;top:703px;" width="10" height="13" viewBox="0 0 10 13"><circle cx="2.4" cy="2.2" r="1.8" fill="#b2b4b6"/><circle cx="2.4" cy="10.6" r="1.8" fill="#b2b4b6"/><circle cx="7.8" cy="3.4" r="1.8" fill="#b2b4b6"/><path d="M2.4 2 V10.6 M7.8 3.6 Q7.8 7 2.6 8" stroke="#b2b4b6" stroke-width="1.5" fill="none"/></svg><span class="t" style="left:1275.5px;top:699.5px;line-height:20px;font-size:12px;color:#bbbbbb;font-family:'Liberation Sans','Noto Sans CJK JP',sans-serif;letter-spacing:-0.438px;">master</span><svg style="left:1319px;top:703px;" width="14" height="13" viewBox="0 0 14 13"><rect x="4.6" y="6" width="8.2" height="6.4" fill="#b2b4b6"/><path d="M7 6 V3.6 A2.7 2.7 0 0 0 1.6 3.6 V5.6" stroke="#b2b4b6" stroke-width="1.5" fill="none"/></svg><svg style="left:1343px;top:702px;" width="18" height="16" viewBox="0 0 18 16"><path d="M7 0.8 C10.6 0.8 12.6 3 12.6 6 C14 6.4 14 9.4 12 10 H2.4 C0 9.6 0.2 6.4 1.6 6 C1.6 3 3.4 0.8 7 0.8z" fill="#b2b4b6"/><text x="4.6" y="8.8" font-size="8.5" font-weight="bold" font-family="Liberation Sans,sans-serif" fill="#3c3f41">?</text><circle cx="13.2" cy="11.4" r="4.2" fill="#3c3f41"/><g transform="translate(9.6 7.8) scale(0.45)"><path d="M6.65 2.98 L6.87 0.89 L9.13 0.89 L9.35 2.98 L11.68 4.32 L13.60 3.47 L14.72 5.42 L13.02 6.65 L13.02 9.35 L14.72 10.58 L13.60 12.53 L11.68 11.68 L9.35 13.02 L9.13 15.11 L6.87 15.11 L6.65 13.02 L4.32 11.68 L2.40 12.53 L1.28 10.58 L2.98 9.35 L2.98 6.65 L1.28 5.42 L2.40 3.47 L4.32 4.32z M8 5.7 a2.3 2.3 0 1 0 0.001 0z" fill="#b2b4b6" fill-rule="evenodd" stroke="#b2b4b6" stroke-width="0.8" stroke-linejoin="round"/></g></svg><svg style="left:606.5px;top:732.5px;" width="24" height="24" viewBox="0 0 24 24"><defs><linearGradient id="wg" x1="0" y1="0" x2="1" y2="1"><stop offset="0" stop-color="#6fd8fb"/><stop offset="1" stop-color="#1a8fe8"/></linearGradient></defs><rect x="0" y="0" width="11.2" height="11.2" rx="0.8" fill="url(#wg)"/><rect x="12.4" y="0" width="11.2" height="11.2" rx="0.8" fill="url(#wg)"/><rect x="0" y="12.4" width="11.2" height="11.2" rx="0.8" fill="url(#wg)"/><rect x="12.4" y="12.4" width="11.2" height="11.2" rx="0.8" fill="url(#wg)"/></svg><svg style="left:652px;top:733px;" width="24" height="24" viewBox="0 0 24 24"><circle cx="13.4" cy="9.6" r="7.6" fill="#2b3c42" stroke="#f2f2f2" stroke-width="2.4"/><path d="M8 15 L2 21.6" stroke="#f2f2f2" stroke-width="3" stroke-linecap="round"/></svg><div class="a" style="left:687.5px;top:724px;width:39px;height:40px;background:#2a3a40;border:1px solid #35454b;border-radius:4px;box-sizing:border-box;"></div><svg style="left:694.5px;top:731.5px;" width="24" height="24" viewBox="0 0 24 24"><path d="M3 2 L16 0 L22 9 L18 22 L4 23 L0 12z" fill="#21d789"/><path d="M14 1 L24 8 L20 21 L11 14z" fill="#f3e744"/><path d="M20 5 L24 9 L21 12z" fill="#1aa3f0"/><path d="M1 12 L8 22 L3 23z" fill="#7bd14a"/><rect x="4.2" y="4.6" width="14.6" height="14.6" fill="#000"/><text x="5.6" y="12.4" font-size="7.6" font-weight="bold" font-family="Liberation Sans,sans-serif" fill="#fff" letter-spacing="-0.2">PC</text><rect x="5.8" y="15.8" width="5.4" height="1.2" fill="#fff"/></svg><div class="a" style="left:699px;top:760px;width:16px;height:3px;border-radius:1.5px;background:#4cc2ff;"></div><svg style="left:739px;top:732px;" width="24" height="24" viewBox="0 0 24 24"><rect x="0" y="0" width="24" height="23.5" rx="2.4" fill="#e85a3a"/><path d="M20 3.6 H9 L4.2 8 V16 L9 20.2 H20 L17.4 16.4 H10.4 L8.6 14.8 V9.2 L10.4 7.4 H17.4z" fill="#ffffff" fill-opacity=".92"/></svg><div class="a" style="left:748px;top:760px;width:6px;height:3px;border-radius:1.5px;background:#8a9296;"></div><svg style="left:1026px;top:740px;" width="12" height="8" viewBox="0 0 12 8"><path d="M1 6.8 L6 1.6 L11 6.8" stroke="#f2f2f2" stroke-width="1.4" fill="none"/></svg><svg style="left:1047px;top:736px;" width="18" height="16" viewBox="0 0 18 16"><path d="M4.5 0.5 L8 2.8 L4.5 5 L1 2.8z M11.5 0.5 L15 2.8 L11.5 5 L8 2.8z M4.5 5.6 L8 7.8 L4.5 10 L1 7.8z M8 8.6 L10.6 10.4 L8 12.2 L5.4 10.4z" fill="#f2f2f2"/><circle cx="13" cy="10.4" r="4" fill="#2b7de9"/><path d="M11.2 10.4 L12.6 11.8 L15 9.2" stroke="#fff" stroke-width="1" fill="none"/></svg><svg style="left:1077px;top:735px;" width="12" height="18" viewBox="0 0 12 18"><rect x="3.6" y="0.6" width="4.8" height="10" rx="2.4" fill="#4d9fda"/><path d="M1 7.6 Q1 13 6 13 Q11 13 11 7.6 M6 13 V16.6" stroke="#7fb4dc" stroke-width="1.3" fill="none"/></svg><span class="t" style="left:1111.3px;top:735.3px;line-height:20px;font-size:19px;color:#f2f2f2;font-family:'Liberation Sans','Noto Sans CJK JP',sans-serif;font-family:'Liberation Serif',serif;font-weight:bold;transform:scaleX(0.64);transform-origin:0 0;">A</span><svg style="left:1144px;top:736px;" width="18" height="16" viewBox="0 0 18 16"><circle cx="8" cy="7.6" r="7" fill="#2d7bea"/><circle cx="12.6" cy="11.6" r="2.6" fill="#e8453c"/><circle cx="14.6" cy="9.4" r="1.6" fill="#f4b400"/></svg><svg style="left:1182px;top:737px;" width="19" height="14" viewBox="0 0 19 14"><path d="M1 5 Q9.5 -3 18 5" stroke="#f2f2f2" stroke-width="1.4" fill="none"/><path d="M4 8 Q9.5 2.6 15 8" stroke="#f2f2f2" stroke-width="1.4" fill="none"/><path d="M6.8 10.6 Q9.5 8 12.2 10.6" stroke="#f2f2f2" stroke-width="1.4" fill="none"/><circle cx="9.5" cy="12.6" r="1.2" fill="#f2f2f2"/></svg><svg style="left:1207px;top:737px;" width="18" height="14" viewBox="0 0 18 14"><path d="M0.8 4.8 H3.6 L7.4 1.2 V12.8 L3.6 9.2 H0.8z" fill="none" stroke="#f2f2f2" stroke-width="1.2"/><path d="M9.6 4.6 Q11.4 7 9.6 9.4 M11.8 2.8 Q14.8 7 11.8 11.2 M14 1 Q18.4 7 14 13" stroke="#f2f2f2" stroke-width="1.1" fill="none"/></svg><svg style="left:1231px;top:738px;" width="18" height="12" viewBox="0 0 18 12"><rect x="2.6" y="1.6" width="13" height="8.8" rx="1.6" fill="none" stroke="#f2f2f2" stroke-width="1.2"/><rect x="4.4" y="3.4" width="7.4" height="5.2" fill="#f2f2f2"/><path d="M16.4 4.4 V7.6" stroke="#f2f2f2" stroke-width="1.6"/><path d="M0.4 3 V6 H3.4 M1.9 0.6 V3" stroke="#f2f2f2" stroke-width="1.1" fill="none"/></svg><span class="t" style="left:1304px;top:726.5px;line-height:20px;font-size:12px;color:#f2f2f2;font-family:'Liberation Sans','Noto Sans CJK JP',sans-serif;letter-spacing:-0.620px;">9:51</span><span class="t" style="left:1264px;top:741.5px;line-height:20px;font-size:12px;color:#f2f2f2;font-family:'Liberation Sans','Noto Sans CJK JP',sans-serif;letter-spacing:0.049px;">2022/07/06</span><svg style="left:1334px;top:737px;" width="14" height="15" viewBox="0 0 14 15"><path d="M5.4 1 A6.6 6.6 0 1 0 12.8 9.6 A5.6 5.6 0 0 1 5.4 1z" fill="none" stroke="#f2f2f2" stroke-width="1.2"/></svg></body></html>
